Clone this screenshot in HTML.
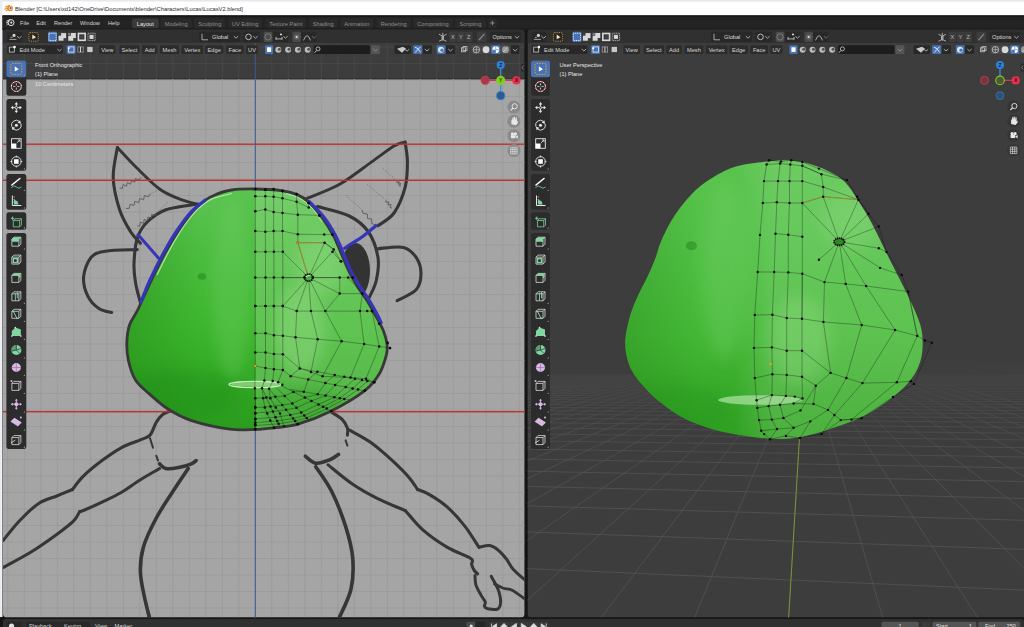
<!DOCTYPE html>
<html><head><meta charset="utf-8"><style>
html,body{margin:0;padding:0;width:1024px;height:627px;overflow:hidden;background:#161616}
svg{display:block}
text{font-family:"Liberation Sans", sans-serif}
</style></head><body>
<svg width="1024" height="627" viewBox="0 0 1024 627"><rect x="0" y="0" width="1024" height="627" fill="#161616"/><rect x="0" y="0" width="1024" height="15.5" fill="#ffffff"/><rect x="0" y="0" width="1024" height="1.5" fill="#e6e8eb"/><rect x="0" y="0" width="2.5" height="617" fill="#eceef1"/><rect x="2.5" y="15.5" width="1021.5" height="14" fill="#232323"/><rect x="2.5" y="15.5" width="1021.5" height="1.5" fill="#181818"/><rect x="2.5" y="28.3" width="1021.5" height="1.5" fill="#1d1d1d"/><g transform="translate(10.2,8.3) scale(0.85)"><circle r="3.4" fill="#f08a1c"/><path d="M-1 -3.3 L-5.8 -1.6 M-1.8 -1.2 L-6.2 1.2 M-2 0.8 L-4.5 2.8" stroke="#f08a1c" stroke-width="1.3" stroke-linecap="round"/><circle cx="0.6" cy="-0.2" r="1.9" fill="#ffffff"/><circle cx="0.6" cy="-0.2" r="1.25" fill="#2a6ec0"/></g><text x="15.00" y="10.60" font-size="5.75" fill="#2a2a2a" text-anchor="start" >Blender [C:\Users\xd142\OneDrive\Documents\blender\Characters\Lucas\LucasV2.blend]</text><g transform="translate(11,22.6)"><circle r="3" fill="none" stroke="#e0e0e0" stroke-width="1"/><circle cx="0.3" r="1.1" fill="#e0e0e0"/><path d="M-1 -3 L-4.5 -1.5 M-1.5 -1.5 L-5 0.5 M-1.8 0 L-4.5 2.5" stroke="#e0e0e0" stroke-width="0.9"/></g><text x="20.00" y="24.60" font-size="5.6" fill="#d6d6d6" text-anchor="start" >File</text><text x="36.20" y="24.60" font-size="5.6" fill="#d6d6d6" text-anchor="start" >Edit</text><text x="54.00" y="24.60" font-size="5.6" fill="#d6d6d6" text-anchor="start" >Render</text><text x="80.00" y="24.60" font-size="5.6" fill="#d6d6d6" text-anchor="start" >Window</text><text x="108.00" y="24.60" font-size="5.6" fill="#d6d6d6" text-anchor="start" >Help</text><rect x="132.00" y="18.60" width="26.60" height="9.30" rx="2" fill="#3a3a3a" /><text x="145.30" y="25.50" font-size="5.65" fill="#e6e6e6" text-anchor="middle" >Layout</text><rect x="160.50" y="18.60" width="31.30" height="9.30" rx="2" fill="#2a2a2a" /><text x="176.15" y="25.50" font-size="5.65" fill="#8e8e8e" text-anchor="middle" >Modeling</text><rect x="194.00" y="18.60" width="31.50" height="9.30" rx="2" fill="#2a2a2a" /><text x="209.75" y="25.50" font-size="5.65" fill="#8e8e8e" text-anchor="middle" >Sculpting</text><rect x="228.30" y="18.60" width="33.70" height="9.30" rx="2" fill="#2a2a2a" /><text x="245.15" y="25.50" font-size="5.65" fill="#8e8e8e" text-anchor="middle" >UV Editing</text><rect x="265.40" y="18.60" width="40.80" height="9.30" rx="2" fill="#2a2a2a" /><text x="285.80" y="25.50" font-size="5.65" fill="#8e8e8e" text-anchor="middle" >Texture Paint</text><rect x="308.80" y="18.60" width="28.80" height="9.30" rx="2" fill="#2a2a2a" /><text x="323.20" y="25.50" font-size="5.65" fill="#8e8e8e" text-anchor="middle" >Shading</text><rect x="340.00" y="18.60" width="33.50" height="9.30" rx="2" fill="#2a2a2a" /><text x="356.75" y="25.50" font-size="5.65" fill="#8e8e8e" text-anchor="middle" >Animation</text><rect x="376.70" y="18.60" width="34.10" height="9.30" rx="2" fill="#2a2a2a" /><text x="393.75" y="25.50" font-size="5.65" fill="#8e8e8e" text-anchor="middle" >Rendering</text><rect x="413.00" y="18.60" width="39.90" height="9.30" rx="2" fill="#2a2a2a" /><text x="432.95" y="25.50" font-size="5.65" fill="#8e8e8e" text-anchor="middle" >Compositing</text><rect x="455.00" y="18.60" width="30.80" height="9.30" rx="2" fill="#2a2a2a" /><text x="470.40" y="25.50" font-size="5.65" fill="#8e8e8e" text-anchor="middle" >Scripting</text><rect x="488.00" y="18.60" width="8.80" height="9.30" rx="2" fill="#2a2a2a" /><path d="M490.2 23 h4.4 M492.4 20.8 v4.4" stroke="#9a9a9a" stroke-width="0.8"/><clipPath id="clipL"><rect x="3" y="29.5" width="521.6" height="587.9" rx="4"/></clipPath><clipPath id="clipR"><rect x="527.5" y="29.5" width="502.5" height="587.9" rx="4"/></clipPath><g clip-path="url(#clipL)"><rect x="3" y="29.5" width="521.6" height="587.9" fill="#3d3d3d"/><line x1="7.8" y1="29.5" x2="7.8" y2="79" stroke="#474747" stroke-width="1"/><line x1="24.3" y1="29.5" x2="24.3" y2="79" stroke="#474747" stroke-width="1"/><line x1="40.8" y1="29.5" x2="40.8" y2="79" stroke="#474747" stroke-width="1"/><line x1="57.3" y1="29.5" x2="57.3" y2="79" stroke="#474747" stroke-width="1"/><line x1="73.8" y1="29.5" x2="73.8" y2="79" stroke="#474747" stroke-width="1"/><line x1="90.3" y1="29.5" x2="90.3" y2="79" stroke="#474747" stroke-width="1"/><line x1="106.8" y1="29.5" x2="106.8" y2="79" stroke="#474747" stroke-width="1"/><line x1="123.3" y1="29.5" x2="123.3" y2="79" stroke="#474747" stroke-width="1"/><line x1="139.8" y1="29.5" x2="139.8" y2="79" stroke="#474747" stroke-width="1"/><line x1="156.3" y1="29.5" x2="156.3" y2="79" stroke="#474747" stroke-width="1"/><line x1="172.8" y1="29.5" x2="172.8" y2="79" stroke="#474747" stroke-width="1"/><line x1="189.3" y1="29.5" x2="189.3" y2="79" stroke="#474747" stroke-width="1"/><line x1="205.8" y1="29.5" x2="205.8" y2="79" stroke="#474747" stroke-width="1"/><line x1="222.3" y1="29.5" x2="222.3" y2="79" stroke="#474747" stroke-width="1"/><line x1="238.8" y1="29.5" x2="238.8" y2="79" stroke="#474747" stroke-width="1"/><line x1="255.3" y1="29.5" x2="255.3" y2="79" stroke="#474747" stroke-width="1"/><line x1="271.8" y1="29.5" x2="271.8" y2="79" stroke="#474747" stroke-width="1"/><line x1="288.3" y1="29.5" x2="288.3" y2="79" stroke="#474747" stroke-width="1"/><line x1="304.8" y1="29.5" x2="304.8" y2="79" stroke="#474747" stroke-width="1"/><line x1="321.3" y1="29.5" x2="321.3" y2="79" stroke="#474747" stroke-width="1"/><line x1="337.8" y1="29.5" x2="337.8" y2="79" stroke="#474747" stroke-width="1"/><line x1="354.3" y1="29.5" x2="354.3" y2="79" stroke="#474747" stroke-width="1"/><line x1="370.8" y1="29.5" x2="370.8" y2="79" stroke="#474747" stroke-width="1"/><line x1="387.3" y1="29.5" x2="387.3" y2="79" stroke="#474747" stroke-width="1"/><line x1="403.8" y1="29.5" x2="403.8" y2="79" stroke="#474747" stroke-width="1"/><line x1="420.3" y1="29.5" x2="420.3" y2="79" stroke="#474747" stroke-width="1"/><line x1="436.8" y1="29.5" x2="436.8" y2="79" stroke="#474747" stroke-width="1"/><line x1="453.3" y1="29.5" x2="453.3" y2="79" stroke="#474747" stroke-width="1"/><line x1="469.8" y1="29.5" x2="469.8" y2="79" stroke="#474747" stroke-width="1"/><line x1="486.3" y1="29.5" x2="486.3" y2="79" stroke="#474747" stroke-width="1"/><line x1="502.8" y1="29.5" x2="502.8" y2="79" stroke="#474747" stroke-width="1"/><line x1="519.3" y1="29.5" x2="519.3" y2="79" stroke="#474747" stroke-width="1"/><line x1="3" y1="30.5" x2="524.6" y2="30.5" stroke="#474747" stroke-width="1"/><line x1="3" y1="47.0" x2="524.6" y2="47.0" stroke="#474747" stroke-width="1"/><line x1="3" y1="63.5" x2="524.6" y2="63.5" stroke="#474747" stroke-width="1"/><rect x="3" y="79" width="521.6" height="538.4" fill="#a5a5a5"/><rect x="3" y="78.6" width="521.6" height="1.2" fill="#262626"/><line x1="7.8" y1="79" x2="7.8" y2="617.4" stroke="#9b9b9b" stroke-width="1"/><line x1="24.3" y1="79" x2="24.3" y2="617.4" stroke="#9b9b9b" stroke-width="1"/><line x1="40.8" y1="79" x2="40.8" y2="617.4" stroke="#9b9b9b" stroke-width="1"/><line x1="57.3" y1="79" x2="57.3" y2="617.4" stroke="#9b9b9b" stroke-width="1"/><line x1="73.8" y1="79" x2="73.8" y2="617.4" stroke="#9b9b9b" stroke-width="1"/><line x1="90.3" y1="79" x2="90.3" y2="617.4" stroke="#9b9b9b" stroke-width="1"/><line x1="106.8" y1="79" x2="106.8" y2="617.4" stroke="#9b9b9b" stroke-width="1"/><line x1="123.3" y1="79" x2="123.3" y2="617.4" stroke="#9b9b9b" stroke-width="1"/><line x1="139.8" y1="79" x2="139.8" y2="617.4" stroke="#9b9b9b" stroke-width="1"/><line x1="156.3" y1="79" x2="156.3" y2="617.4" stroke="#9b9b9b" stroke-width="1"/><line x1="172.8" y1="79" x2="172.8" y2="617.4" stroke="#9b9b9b" stroke-width="1"/><line x1="189.3" y1="79" x2="189.3" y2="617.4" stroke="#9b9b9b" stroke-width="1"/><line x1="205.8" y1="79" x2="205.8" y2="617.4" stroke="#9b9b9b" stroke-width="1"/><line x1="222.3" y1="79" x2="222.3" y2="617.4" stroke="#9b9b9b" stroke-width="1"/><line x1="238.8" y1="79" x2="238.8" y2="617.4" stroke="#9b9b9b" stroke-width="1"/><line x1="255.3" y1="79" x2="255.3" y2="617.4" stroke="#9b9b9b" stroke-width="1"/><line x1="271.8" y1="79" x2="271.8" y2="617.4" stroke="#9b9b9b" stroke-width="1"/><line x1="288.3" y1="79" x2="288.3" y2="617.4" stroke="#9b9b9b" stroke-width="1"/><line x1="304.8" y1="79" x2="304.8" y2="617.4" stroke="#9b9b9b" stroke-width="1"/><line x1="321.3" y1="79" x2="321.3" y2="617.4" stroke="#9b9b9b" stroke-width="1"/><line x1="337.8" y1="79" x2="337.8" y2="617.4" stroke="#9b9b9b" stroke-width="1"/><line x1="354.3" y1="79" x2="354.3" y2="617.4" stroke="#9b9b9b" stroke-width="1"/><line x1="370.8" y1="79" x2="370.8" y2="617.4" stroke="#9b9b9b" stroke-width="1"/><line x1="387.3" y1="79" x2="387.3" y2="617.4" stroke="#9b9b9b" stroke-width="1"/><line x1="403.8" y1="79" x2="403.8" y2="617.4" stroke="#9b9b9b" stroke-width="1"/><line x1="420.3" y1="79" x2="420.3" y2="617.4" stroke="#9b9b9b" stroke-width="1"/><line x1="436.8" y1="79" x2="436.8" y2="617.4" stroke="#9b9b9b" stroke-width="1"/><line x1="453.3" y1="79" x2="453.3" y2="617.4" stroke="#9b9b9b" stroke-width="1"/><line x1="469.8" y1="79" x2="469.8" y2="617.4" stroke="#9b9b9b" stroke-width="1"/><line x1="486.3" y1="79" x2="486.3" y2="617.4" stroke="#9b9b9b" stroke-width="1"/><line x1="502.8" y1="79" x2="502.8" y2="617.4" stroke="#9b9b9b" stroke-width="1"/><line x1="519.3" y1="79" x2="519.3" y2="617.4" stroke="#9b9b9b" stroke-width="1"/><line x1="3" y1="80.0" x2="524.6" y2="80.0" stroke="#9b9b9b" stroke-width="1"/><line x1="3" y1="96.5" x2="524.6" y2="96.5" stroke="#9b9b9b" stroke-width="1"/><line x1="3" y1="113.0" x2="524.6" y2="113.0" stroke="#9b9b9b" stroke-width="1"/><line x1="3" y1="129.5" x2="524.6" y2="129.5" stroke="#9b9b9b" stroke-width="1"/><line x1="3" y1="146.0" x2="524.6" y2="146.0" stroke="#9b9b9b" stroke-width="1"/><line x1="3" y1="162.5" x2="524.6" y2="162.5" stroke="#9b9b9b" stroke-width="1"/><line x1="3" y1="179.0" x2="524.6" y2="179.0" stroke="#9b9b9b" stroke-width="1"/><line x1="3" y1="195.5" x2="524.6" y2="195.5" stroke="#9b9b9b" stroke-width="1"/><line x1="3" y1="212.0" x2="524.6" y2="212.0" stroke="#9b9b9b" stroke-width="1"/><line x1="3" y1="228.5" x2="524.6" y2="228.5" stroke="#9b9b9b" stroke-width="1"/><line x1="3" y1="245.0" x2="524.6" y2="245.0" stroke="#9b9b9b" stroke-width="1"/><line x1="3" y1="261.5" x2="524.6" y2="261.5" stroke="#9b9b9b" stroke-width="1"/><line x1="3" y1="278.0" x2="524.6" y2="278.0" stroke="#9b9b9b" stroke-width="1"/><line x1="3" y1="294.5" x2="524.6" y2="294.5" stroke="#9b9b9b" stroke-width="1"/><line x1="3" y1="311.0" x2="524.6" y2="311.0" stroke="#9b9b9b" stroke-width="1"/><line x1="3" y1="327.5" x2="524.6" y2="327.5" stroke="#9b9b9b" stroke-width="1"/><line x1="3" y1="344.0" x2="524.6" y2="344.0" stroke="#9b9b9b" stroke-width="1"/><line x1="3" y1="360.5" x2="524.6" y2="360.5" stroke="#9b9b9b" stroke-width="1"/><line x1="3" y1="377.0" x2="524.6" y2="377.0" stroke="#9b9b9b" stroke-width="1"/><line x1="3" y1="393.5" x2="524.6" y2="393.5" stroke="#9b9b9b" stroke-width="1"/><line x1="3" y1="410.0" x2="524.6" y2="410.0" stroke="#9b9b9b" stroke-width="1"/><line x1="3" y1="426.5" x2="524.6" y2="426.5" stroke="#9b9b9b" stroke-width="1"/><line x1="3" y1="443.0" x2="524.6" y2="443.0" stroke="#9b9b9b" stroke-width="1"/><line x1="3" y1="459.5" x2="524.6" y2="459.5" stroke="#9b9b9b" stroke-width="1"/><line x1="3" y1="476.0" x2="524.6" y2="476.0" stroke="#9b9b9b" stroke-width="1"/><line x1="3" y1="492.5" x2="524.6" y2="492.5" stroke="#9b9b9b" stroke-width="1"/><line x1="3" y1="509.0" x2="524.6" y2="509.0" stroke="#9b9b9b" stroke-width="1"/><line x1="3" y1="525.5" x2="524.6" y2="525.5" stroke="#9b9b9b" stroke-width="1"/><line x1="3" y1="542.0" x2="524.6" y2="542.0" stroke="#9b9b9b" stroke-width="1"/><line x1="3" y1="558.5" x2="524.6" y2="558.5" stroke="#9b9b9b" stroke-width="1"/><line x1="3" y1="575.0" x2="524.6" y2="575.0" stroke="#9b9b9b" stroke-width="1"/><line x1="3" y1="591.5" x2="524.6" y2="591.5" stroke="#9b9b9b" stroke-width="1"/><line x1="3" y1="608.0" x2="524.6" y2="608.0" stroke="#9b9b9b" stroke-width="1"/><path d="M140.40 243.20 C138.80 241.33 134.27 237.58 130.80 232.00 C127.33 226.42 122.53 218.73 119.60 209.70 C116.67 200.67 113.57 188.17 113.20 177.80 C112.83 167.43 116.70 152.55 117.40 147.50" fill="none" stroke="#363636" stroke-width="3.1" stroke-linecap="round" stroke-linejoin="round"/><path d="M117.40 147.50 C120.70 150.97 130.18 161.38 137.20 168.30 C144.22 175.22 152.60 183.95 159.50 189.00 C166.40 194.05 172.48 196.10 178.60 198.60 C184.72 201.10 193.27 203.10 196.20 204.00" fill="none" stroke="#363636" stroke-width="2.9" stroke-linecap="round" stroke-linejoin="round"/><path d="M198.00 204.00 C192.65 204.95 174.45 206.62 165.90 209.70 C157.35 212.78 151.48 217.70 146.70 222.50 C141.92 227.30 139.32 231.58 137.20 238.50 C135.08 245.42 134.27 256.58 134.00 264.00 C133.73 271.42 134.53 276.63 135.60 283.00 C136.67 289.37 138.67 296.37 140.40 302.20 C142.13 308.03 145.07 315.37 146.00 318.00" fill="none" stroke="#363636" stroke-width="3.1" stroke-linecap="round" stroke-linejoin="round"/><path d="M137.20 249.60 C131.88 249.87 113.00 249.87 105.30 251.20 C97.60 252.53 94.62 253.35 91.00 257.60 C87.38 261.85 84.15 270.32 83.60 276.70 C83.05 283.08 85.15 290.58 87.70 295.90 C90.25 301.22 94.92 305.83 98.90 308.60 C102.88 311.37 109.48 311.85 111.60 312.50" fill="none" stroke="#363636" stroke-width="3.1" stroke-linecap="round" stroke-linejoin="round"/><path d="M306.30 198.60 C311.87 196.20 328.82 190.32 339.70 184.20 C350.58 178.08 362.55 168.27 371.60 161.90 C380.65 155.53 388.42 149.30 394.00 146.00 C399.58 142.70 403.25 142.75 405.10 142.10" fill="none" stroke="#363636" stroke-width="2.9" stroke-linecap="round" stroke-linejoin="round"/><path d="M405.10 142.10 C405.48 145.40 407.40 154.35 407.40 161.90 C407.40 169.45 407.33 178.88 405.10 187.40 C402.87 195.92 398.52 206.62 394.00 213.00 C389.48 219.38 380.67 223.58 378.00 225.70" fill="none" stroke="#363636" stroke-width="3.1" stroke-linecap="round" stroke-linejoin="round"/><path d="M317.40 206.60 C322.72 208.17 340.78 211.77 349.30 216.00 C357.82 220.23 363.72 225.07 368.50 232.00 C373.28 238.93 376.68 249.60 378.00 257.60 C379.32 265.60 377.73 273.62 376.40 280.00 C375.07 286.38 372.40 290.90 370.00 295.90 C367.60 300.90 363.33 307.65 362.00 310.00" fill="none" stroke="#363636" stroke-width="3.1" stroke-linecap="round" stroke-linejoin="round"/><ellipse cx="355.5" cy="271" rx="14.5" ry="28" fill="#333333"/><path d="M378.00 248.70 C382.25 248.48 397.12 245.92 403.50 247.40 C409.88 248.88 413.38 253.25 416.30 257.60 C419.22 261.95 421.00 268.18 421.00 273.50 C421.00 278.82 420.27 284.97 416.30 289.50 C412.33 294.03 400.38 298.83 397.20 300.70" fill="none" stroke="#363636" stroke-width="3.1" stroke-linecap="round" stroke-linejoin="round"/><path d="M119.60 188.00 L122.34 188.33 L123.10 184.61 L126.50 186.29 L127.26 182.57 L130.66 184.25 L131.42 180.53 L134.82 182.21 L135.58 178.49 L138.98 180.17 L140.40 177.80" fill="none" stroke="#505050" stroke-width="0.8"/><path d="M140.4 177.8 L146 175" fill="none" stroke="#6a6a6a" stroke-width="0.7" stroke-dasharray="1.5 1.5"/><path d="M126.00 208.50 L129.18 208.33 L130.02 204.32 L133.98 205.43 L134.82 201.42 L138.78 202.53 L139.62 198.52 L143.58 199.63 L144.42 195.62 L148.38 196.73 L150.00 194.00" fill="none" stroke="#505050" stroke-width="0.8"/><path d="M150 194 L157 190.5" fill="none" stroke="#6a6a6a" stroke-width="0.7" stroke-dasharray="1.5 1.5"/><path d="M137.20 226.00 L139.95 225.94 L140.18 222.16 L143.77 223.34 L144.00 219.56 L147.59 220.74 L147.82 216.96 L151.41 218.14 L151.64 214.36 L155.23 215.54 L156.30 213.00" fill="none" stroke="#505050" stroke-width="0.8"/><path d="M156.3 213 L168 202" fill="none" stroke="#6a6a6a" stroke-width="0.7" stroke-dasharray="1.5 1.5"/><path d="M382.8 168.3 L397.2 181" fill="none" stroke="#6a6a6a" stroke-width="0.7" stroke-dasharray="1.5 1.5"/><path d="M397.20 181.00 L396.72 182.68 L399.58 181.82 L397.99 184.35 L400.85 183.49 L399.25 186.01 L401.00 186.00" fill="none" stroke="#505050" stroke-width="0.8"/><path d="M366.9 184.2 L386 200.2" fill="none" stroke="#6a6a6a" stroke-width="0.7" stroke-dasharray="1.5 1.5"/><path d="M386.00 200.20 L385.89 202.35 L389.11 201.95 L387.89 204.95 L391.11 204.55 L389.89 207.55 L392.00 208.00" fill="none" stroke="#505050" stroke-width="0.8"/><path d="M346.1 195.4 L362 210" fill="none" stroke="#6a6a6a" stroke-width="0.7" stroke-dasharray="1.5 1.5"/><path d="M362.00 210.00 L363.11 213.42 L367.39 214.08 L367.44 218.42 L371.72 219.08 L371.78 223.42 L375.00 225.00" fill="none" stroke="#505050" stroke-width="0.8"/><path d="M172.20 410.20 C170.62 410.90 165.35 412.38 162.70 414.40 C160.05 416.42 158.42 418.85 156.30 422.30 C154.18 425.75 152.65 432.17 150.00 435.10 C147.35 438.03 145.20 437.78 140.40 439.90 C135.60 442.02 127.60 444.35 121.20 447.80 C114.80 451.25 108.38 455.80 102.00 460.60 C95.62 465.40 87.82 471.78 82.90 476.60 C77.98 481.42 74.23 487.35 72.50 489.50" fill="none" stroke="#363636" stroke-width="3.1" stroke-linecap="round" stroke-linejoin="round"/><path d="M72.50 489.50 C69.98 490.53 63.10 493.33 57.40 495.70 C51.70 498.07 44.68 499.45 38.30 503.70 C31.92 507.95 24.95 515.08 19.10 521.20 C13.25 527.32 5.85 537.20 3.20 540.40" fill="none" stroke="#363636" stroke-width="3.1" stroke-linecap="round" stroke-linejoin="round"/><path d="M150.00 438.30 C150.50 439.88 152.50 446.22 153.00 447.80" fill="none" stroke="#363636" stroke-width="2.0" stroke-linecap="round" stroke-linejoin="round"/><path d="M156.30 455.80 C156.58 456.60 157.72 459.80 158.00 460.60" fill="none" stroke="#363636" stroke-width="2.0" stroke-linecap="round" stroke-linejoin="round"/><path d="M159.50 463.80 C160.57 464.60 162.72 467.97 165.90 468.60 C169.08 469.23 174.35 468.40 178.60 467.60 C182.85 466.80 188.47 464.97 191.40 463.80 C194.33 462.63 195.40 461.13 196.20 460.60" fill="none" stroke="#363636" stroke-width="3.6" stroke-linecap="round" stroke-linejoin="round"/><path d="M159.50 468.60 C156.32 470.45 146.78 475.72 140.40 479.70 C134.02 483.68 127.60 488.77 121.20 492.50 C114.80 496.23 108.12 499.18 102.00 502.10 C95.88 505.02 88.22 508.42 84.50 510.00 C80.78 511.58 80.50 511.33 79.70 511.60" fill="none" stroke="#363636" stroke-width="3.1" stroke-linecap="round" stroke-linejoin="round"/><path d="M79.70 511.60 C78.65 513.20 77.12 517.47 73.40 521.20 C69.68 524.93 64.32 528.95 57.40 534.00 C50.48 539.05 40.93 545.92 31.90 551.50 C22.87 557.08 7.98 564.83 3.20 567.50" fill="none" stroke="#363636" stroke-width="3.1" stroke-linecap="round" stroke-linejoin="round"/><path d="M188.20 468.60 C185.53 472.58 177.52 484.27 172.20 492.50 C166.88 500.73 161.08 508.97 156.30 518.00 C151.52 527.03 146.15 537.67 143.50 546.70 C140.85 555.73 140.13 563.32 140.40 572.20 C140.67 581.08 143.50 592.20 145.10 600.00 C146.70 607.80 149.18 615.83 150.00 619.00" fill="none" stroke="#363636" stroke-width="3.6" stroke-linecap="round" stroke-linejoin="round"/><path d="M146.00 603.00 C146.50 605.67 148.50 616.33 149.00 619.00" fill="none" stroke="#363636" stroke-width="2.6" stroke-linecap="round" stroke-linejoin="round"/><path d="M331.60 412.30 C333.35 413.47 339.47 416.67 342.10 419.30 C344.73 421.93 346.52 425.47 347.40 428.10 C348.28 430.73 347.40 433.93 347.40 435.10" fill="none" stroke="#363636" stroke-width="3.1" stroke-linecap="round" stroke-linejoin="round"/><path d="M349.10 429.80 C352.62 431.85 363.17 437.12 370.20 442.10 C377.23 447.08 384.87 453.85 391.30 459.70 C397.73 465.55 404.42 472.23 408.80 477.20 C413.18 482.17 416.13 487.45 417.60 489.50" fill="none" stroke="#363636" stroke-width="3.1" stroke-linecap="round" stroke-linejoin="round"/><path d="M417.60 489.50 C419.65 490.38 424.93 491.87 429.90 494.80 C434.87 497.73 441.55 501.83 447.40 507.10 C453.25 512.37 459.73 519.68 465.00 526.40 C470.27 533.12 476.67 543.90 479.00 547.40" fill="none" stroke="#363636" stroke-width="3.1" stroke-linecap="round" stroke-linejoin="round"/><path d="M479.30 547.30 C481.00 547.02 486.38 545.15 489.50 545.60 C492.62 546.05 495.15 547.72 498.00 550.00 C500.85 552.28 504.03 556.05 506.60 559.30 C509.17 562.55 510.17 565.88 513.40 569.50 C516.63 573.12 523.90 579.08 526.00 581.00" fill="none" stroke="#363636" stroke-width="3.0" stroke-linecap="round" stroke-linejoin="round"/><path d="M345.60 440.40 C345.90 441.27 347.10 444.73 347.40 445.60" fill="none" stroke="#363636" stroke-width="2.0" stroke-linecap="round" stroke-linejoin="round"/><path d="M305.30 456.20 C307.05 457.37 311.72 462.62 315.80 463.20 C319.88 463.78 326.00 461.17 329.80 459.70 C333.60 458.23 337.13 455.28 338.60 454.40" fill="none" stroke="#363636" stroke-width="3.6" stroke-linecap="round" stroke-linejoin="round"/><path d="M315.80 466.70 C318.43 470.80 326.63 481.35 331.60 491.30 C336.57 501.25 342.08 515.28 345.60 526.40 C349.12 537.52 351.82 547.48 352.70 558.00 C353.58 568.52 353.25 579.33 350.90 589.50 C348.55 599.67 340.65 614.08 338.60 619.00" fill="none" stroke="#363636" stroke-width="3.6" stroke-linecap="round" stroke-linejoin="round"/><path d="M328.10 464.90 C332.20 468.12 344.52 478.63 352.70 484.20 C360.88 489.77 368.43 493.90 377.20 498.30 C385.97 502.70 400.62 508.55 405.30 510.60" fill="none" stroke="#363636" stroke-width="3.1" stroke-linecap="round" stroke-linejoin="round"/><path d="M405.30 510.60 C408.22 513.82 415.78 523.77 422.80 529.90 C429.82 536.03 439.42 542.65 447.40 547.40 C455.38 552.15 466.67 555.57 470.70 558.40 C474.73 561.23 471.02 562.40 471.60 564.40 C472.18 566.40 473.20 568.83 474.20 570.40 C475.20 571.97 477.03 573.23 477.60 573.80" fill="none" stroke="#363636" stroke-width="3.1" stroke-linecap="round" stroke-linejoin="round"/><path d="M475.00 575.50 C475.15 577.07 474.90 581.63 475.90 584.90 C476.90 588.17 479.43 592.25 481.00 595.10 C482.57 597.95 484.73 600.15 485.30 602.00 C485.87 603.85 483.98 605.07 484.40 606.20 C484.82 607.33 485.53 608.37 487.80 608.80 C490.07 609.23 495.87 609.93 498.00 608.80 C500.13 607.67 500.45 604.85 500.60 602.00 C500.75 599.15 499.75 594.70 498.90 591.70 C498.05 588.70 496.78 586.57 495.50 584.00 C494.22 581.43 491.92 577.58 491.20 576.30" fill="none" stroke="#363636" stroke-width="3.0" stroke-linecap="round" stroke-linejoin="round"/><path d="M494.60 584.00 C496.03 584.70 500.35 587.20 503.20 588.20 C506.05 589.20 508.57 588.57 511.70 590.00 C514.83 591.43 519.62 595.13 522.00 596.80 C524.38 598.47 525.33 599.47 526.00 600.00" fill="none" stroke="#363636" stroke-width="2.8" stroke-linecap="round" stroke-linejoin="round"/><rect x="3" y="143.5" width="522" height="1.4" fill="#c03030"/><rect x="3" y="179.60000000000002" width="522" height="1.4" fill="#c03030"/><rect x="3" y="411.0" width="522" height="1.4" fill="#c03030"/><rect x="254.8" y="29.5" width="1" height="590" fill="#3a5a8c"/><defs>
<linearGradient id="gLv" gradientUnits="userSpaceOnUse" x1="0" y1="189" x2="0" y2="430">
<stop offset="0" stop-color="#5cc452"/><stop offset="0.25" stop-color="#4cbd40"/><stop offset="0.6" stop-color="#3bb52c"/><stop offset="1" stop-color="#2a9c1e"/>
</linearGradient>
<linearGradient id="gLh" gradientUnits="userSpaceOnUse" x1="126" y1="0" x2="200" y2="0">
<stop offset="0" stop-color="#1e7a12" stop-opacity="0.35"/><stop offset="1" stop-color="#1e7a12" stop-opacity="0"/>
</linearGradient>
<filter id="blur6" x="-50%" y="-50%" width="200%" height="200%"><feGaussianBlur stdDeviation="7"/></filter>
<filter id="blur3" x="-50%" y="-50%" width="200%" height="200%"><feGaussianBlur stdDeviation="3"/></filter>
<clipPath id="blobL"><path d="M255.30 189.00 C263.83 189.13 275.90 189.90 282.80 190.80 C289.70 191.70 292.33 192.48 296.70 194.40 C301.07 196.32 304.73 198.37 309.00 202.30 C313.27 206.23 318.22 212.42 322.30 218.00 C326.38 223.58 330.33 229.85 333.50 235.80 C336.67 241.75 338.70 247.73 341.30 253.70 C343.90 259.67 346.32 266.02 349.10 271.60 C351.88 277.18 355.02 282.37 358.00 287.20 C360.98 292.03 364.00 295.75 367.00 300.60 C370.00 305.45 373.25 311.23 376.00 316.30 C378.75 321.37 381.67 326.38 383.50 331.00 C385.33 335.62 386.52 340.03 387.00 344.00 C387.48 347.97 387.70 349.80 386.40 354.80 C385.10 359.80 382.80 368.02 379.20 374.00 C375.60 379.98 372.78 384.53 364.80 390.70 C356.82 396.87 342.47 405.42 331.30 411.00 C320.13 416.58 307.35 421.40 297.80 424.20 C288.25 427.00 281.08 426.93 274.00 427.80 C266.92 428.67 262.65 429.17 255.30 429.40 C247.95 429.63 240.52 430.67 229.90 429.20 C219.28 427.73 201.92 423.97 191.60 420.60 C181.28 417.23 175.10 413.50 168.00 409.00 C160.90 404.50 154.42 398.43 149.00 393.60 C143.58 388.77 138.92 385.43 135.50 380.00 C132.08 374.57 129.95 367.17 128.50 361.00 C127.05 354.83 126.63 349.00 126.80 343.00 C126.97 337.00 127.65 330.58 129.50 325.00 C131.35 319.42 134.27 316.92 137.90 309.50 C141.53 302.08 146.83 289.80 151.30 280.50 C155.77 271.20 160.25 261.88 164.70 253.70 C169.15 245.52 173.55 238.10 178.00 231.40 C182.45 224.70 186.93 218.65 191.40 213.50 C195.87 208.35 200.70 203.67 204.80 200.50 C208.90 197.33 211.53 196.25 216.00 194.50 C220.47 192.75 225.05 190.92 231.60 190.00 C238.15 189.08 246.77 188.87 255.30 189.00 Z"/></clipPath>
</defs><path d="M255.30 189.00 C263.83 189.13 275.90 189.90 282.80 190.80 C289.70 191.70 292.33 192.48 296.70 194.40 C301.07 196.32 304.73 198.37 309.00 202.30 C313.27 206.23 318.22 212.42 322.30 218.00 C326.38 223.58 330.33 229.85 333.50 235.80 C336.67 241.75 338.70 247.73 341.30 253.70 C343.90 259.67 346.32 266.02 349.10 271.60 C351.88 277.18 355.02 282.37 358.00 287.20 C360.98 292.03 364.00 295.75 367.00 300.60 C370.00 305.45 373.25 311.23 376.00 316.30 C378.75 321.37 381.67 326.38 383.50 331.00 C385.33 335.62 386.52 340.03 387.00 344.00 C387.48 347.97 387.70 349.80 386.40 354.80 C385.10 359.80 382.80 368.02 379.20 374.00 C375.60 379.98 372.78 384.53 364.80 390.70 C356.82 396.87 342.47 405.42 331.30 411.00 C320.13 416.58 307.35 421.40 297.80 424.20 C288.25 427.00 281.08 426.93 274.00 427.80 C266.92 428.67 262.65 429.17 255.30 429.40 C247.95 429.63 240.52 430.67 229.90 429.20 C219.28 427.73 201.92 423.97 191.60 420.60 C181.28 417.23 175.10 413.50 168.00 409.00 C160.90 404.50 154.42 398.43 149.00 393.60 C143.58 388.77 138.92 385.43 135.50 380.00 C132.08 374.57 129.95 367.17 128.50 361.00 C127.05 354.83 126.63 349.00 126.80 343.00 C126.97 337.00 127.65 330.58 129.50 325.00 C131.35 319.42 134.27 316.92 137.90 309.50 C141.53 302.08 146.83 289.80 151.30 280.50 C155.77 271.20 160.25 261.88 164.70 253.70 C169.15 245.52 173.55 238.10 178.00 231.40 C182.45 224.70 186.93 218.65 191.40 213.50 C195.87 208.35 200.70 203.67 204.80 200.50 C208.90 197.33 211.53 196.25 216.00 194.50 C220.47 192.75 225.05 190.92 231.60 190.00 C238.15 189.08 246.77 188.87 255.30 189.00 Z" fill="url(#gLv)"/><g clip-path="url(#blobL)"><rect x="120" y="180" width="90" height="260" fill="url(#gLh)"/><ellipse cx="232" cy="290" rx="20" ry="90" fill="#7fd474" opacity="0.28" filter="url(#blur6)"/><ellipse cx="180" cy="395" rx="60" ry="25" fill="#1f8a14" opacity="0.35" filter="url(#blur6)"/><rect x="255.3" y="185" width="140" height="250" fill="#a6e09c" opacity="0.33"/><ellipse cx="300" cy="330" rx="25" ry="45" fill="#b0e8a0" opacity="0.3" filter="url(#blur6)"/><ellipse cx="320" cy="265" rx="25" ry="30" fill="#b0e8a0" opacity="0.25" filter="url(#blur6)"/><ellipse cx="300" cy="405" rx="45" ry="18" fill="#2a9a1c" opacity="0.35" filter="url(#blur6)"/></g><path d="M255.30 189.00 C263.83 189.13 275.90 189.90 282.80 190.80 C289.70 191.70 292.33 192.48 296.70 194.40 C301.07 196.32 304.73 198.37 309.00 202.30 C313.27 206.23 318.22 212.42 322.30 218.00 C326.38 223.58 330.33 229.85 333.50 235.80 C336.67 241.75 338.70 247.73 341.30 253.70 C343.90 259.67 346.32 266.02 349.10 271.60 C351.88 277.18 355.02 282.37 358.00 287.20 C360.98 292.03 364.00 295.75 367.00 300.60 C370.00 305.45 373.25 311.23 376.00 316.30 C378.75 321.37 381.67 326.38 383.50 331.00 C385.33 335.62 386.52 340.03 387.00 344.00 C387.48 347.97 387.70 349.80 386.40 354.80 C385.10 359.80 382.80 368.02 379.20 374.00 C375.60 379.98 372.78 384.53 364.80 390.70 C356.82 396.87 342.47 405.42 331.30 411.00 C320.13 416.58 307.35 421.40 297.80 424.20 C288.25 427.00 281.08 426.93 274.00 427.80 C266.92 428.67 262.65 429.17 255.30 429.40 C247.95 429.63 240.52 430.67 229.90 429.20 C219.28 427.73 201.92 423.97 191.60 420.60 C181.28 417.23 175.10 413.50 168.00 409.00 C160.90 404.50 154.42 398.43 149.00 393.60 C143.58 388.77 138.92 385.43 135.50 380.00 C132.08 374.57 129.95 367.17 128.50 361.00 C127.05 354.83 126.63 349.00 126.80 343.00 C126.97 337.00 127.65 330.58 129.50 325.00 C131.35 319.42 134.27 316.92 137.90 309.50 C141.53 302.08 146.83 289.80 151.30 280.50 C155.77 271.20 160.25 261.88 164.70 253.70 C169.15 245.52 173.55 238.10 178.00 231.40 C182.45 224.70 186.93 218.65 191.40 213.50 C195.87 208.35 200.70 203.67 204.80 200.50 C208.90 197.33 211.53 196.25 216.00 194.50 C220.47 192.75 225.05 190.92 231.60 190.00 C238.15 189.08 246.77 188.87 255.30 189.00 Z" fill="none" stroke="#383838" stroke-width="2.8"/><path d="M232.00 193.50 C228.67 194.42 217.50 196.58 212.00 199.00 C206.50 201.42 203.00 204.42 199.00 208.00 C195.00 211.58 191.67 215.67 188.00 220.50 C184.33 225.33 180.50 231.25 177.00 237.00 C173.50 242.75 170.33 248.67 167.00 255.00 C163.67 261.33 158.67 271.67 157.00 275.00" fill="none" stroke="#d8f4d0" stroke-width="1.2" opacity="0.75"/><path d="M286.00 193.50 C288.33 194.33 295.67 196.08 300.00 198.50 C304.33 200.92 308.33 204.08 312.00 208.00 C315.67 211.92 320.33 219.67 322.00 222.00" fill="none" stroke="#d8f4d0" stroke-width="1.0" opacity="0.6"/><ellipse cx="202" cy="276.5" rx="4.2" ry="3.2" fill="#339a28" opacity="0.9"/><ellipse cx="255" cy="384.5" rx="26" ry="3" fill="none" stroke="#d8f4d0" stroke-width="1.3" opacity="0.9"/><ellipse cx="255" cy="384.5" rx="24" ry="2" fill="#9ede90" opacity="0.7"/><path d="M206.00 199.50 C203.50 201.58 195.83 206.83 191.00 212.00 C186.17 217.17 181.58 223.67 177.00 230.50 C172.42 237.33 168.00 244.75 163.50 253.00 C159.00 261.25 153.83 271.67 150.00 280.00 C146.17 288.33 142.08 299.17 140.50 303.00" fill="none" stroke="#3535b8" stroke-width="3.2"/><path d="M137.2 233.7 L159.5 259.2" stroke="#3535b8" stroke-width="3.0"/><path d="M308.50 200.80 C311.05 203.50 319.35 211.30 323.80 217.00 C328.25 222.70 331.97 229.00 335.20 235.00 C338.43 241.00 340.57 247.00 343.20 253.00 C345.83 259.00 348.20 265.40 351.00 271.00 C353.80 276.60 357.00 281.77 360.00 286.60 C363.00 291.43 366.00 295.10 369.00 300.00 C372.00 304.90 375.92 312.00 378.00 316.00 C380.08 320.00 380.92 322.67 381.50 324.00" fill="none" stroke="#3535b8" stroke-width="3.2"/><path d="M377.00 224.70 C374.50 226.75 366.50 233.70 362.00 237.00 C357.50 240.30 353.07 242.47 350.00 244.50 C346.93 246.53 344.67 248.42 343.60 249.20" fill="none" stroke="#3535b8" stroke-width="3.2"/><defs><clipPath id="blobLm"><path d="M255.30 189.00 C263.83 189.13 275.90 189.90 282.80 190.80 C289.70 191.70 292.33 192.48 296.70 194.40 C301.07 196.32 304.73 198.37 309.00 202.30 C313.27 206.23 318.22 212.42 322.30 218.00 C326.38 223.58 330.33 229.85 333.50 235.80 C336.67 241.75 338.70 247.73 341.30 253.70 C343.90 259.67 346.32 266.02 349.10 271.60 C351.88 277.18 355.02 282.37 358.00 287.20 C360.98 292.03 364.00 295.75 367.00 300.60 C370.00 305.45 373.25 311.23 376.00 316.30 C378.75 321.37 381.67 326.38 383.50 331.00 C385.33 335.62 386.52 340.03 387.00 344.00 C387.48 347.97 387.70 349.80 386.40 354.80 C385.10 359.80 382.80 368.02 379.20 374.00 C375.60 379.98 372.78 384.53 364.80 390.70 C356.82 396.87 342.47 405.42 331.30 411.00 C320.13 416.58 307.35 421.40 297.80 424.20 C288.25 427.00 281.08 426.93 274.00 427.80 C266.92 428.67 262.65 429.17 255.30 429.40 C247.95 429.63 240.52 430.67 229.90 429.20 C219.28 427.73 201.92 423.97 191.60 420.60 C181.28 417.23 175.10 413.50 168.00 409.00 C160.90 404.50 154.42 398.43 149.00 393.60 C143.58 388.77 138.92 385.43 135.50 380.00 C132.08 374.57 129.95 367.17 128.50 361.00 C127.05 354.83 126.63 349.00 126.80 343.00 C126.97 337.00 127.65 330.58 129.50 325.00 C131.35 319.42 134.27 316.92 137.90 309.50 C141.53 302.08 146.83 289.80 151.30 280.50 C155.77 271.20 160.25 261.88 164.70 253.70 C169.15 245.52 173.55 238.10 178.00 231.40 C182.45 224.70 186.93 218.65 191.40 213.50 C195.87 208.35 200.70 203.67 204.80 200.50 C208.90 197.33 211.53 196.25 216.00 194.50 C220.47 192.75 225.05 190.92 231.60 190.00 C238.15 189.08 246.77 188.87 255.30 189.00 Z"/></clipPath></defs><g clip-path="url(#blobLm)"><path d="M255.30 189.00 L255.30 196.30 L255.30 211.30 L255.30 231.00 L255.30 251.80 L255.30 277.60 L255.30 306.00 L255.30 333.30 L255.30 352.40 L255.30 366.00 L254.80 388.30 L255.30 398.30 L255.30 407.00 L255.30 413.40 L255.30 419.40 L255.30 424.20 L255.30 429.40" fill="none" stroke="#101010" stroke-width="0.5" opacity="0.65"/><path d="M265.30 189.70 L265.30 196.30 L265.30 209.40 L265.30 231.70 L265.50 251.80 L265.50 277.60 L265.50 306.00 L265.50 333.30 L265.50 352.40 L265.50 368.00 L264.40 380.60 L262.00 388.30 L263.20 398.30 L264.80 407.40 L267.20 413.40 L270.30 420.60 L274.00 427.80" fill="none" stroke="#101010" stroke-width="0.5" opacity="0.65"/><path d="M273.60 189.00 L273.60 196.70 L273.60 212.00 L273.60 231.10 L273.90 251.80 L273.90 277.60 L273.90 306.00 L273.90 335.20 L273.90 354.10 L273.90 369.20 L272.70 381.10 L269.10 388.80 L270.30 398.30 L275.80 407.40 L280.00 413.40 L284.00 426.50" fill="none" stroke="#101010" stroke-width="0.5" opacity="0.65"/><path d="M282.50 190.90 L282.50 198.30 L282.50 212.90 L282.50 231.10 L282.80 251.80 L282.80 277.60 L282.80 306.00 L282.80 335.70 L282.80 354.30 L282.80 369.90 L278.20 382.30 L282.30 384.70" fill="none" stroke="#101010" stroke-width="0.5" opacity="0.65"/><path d="M296.60 194.10 L296.60 201.80 L297.80 214.70 L297.80 234.30 L297.80 242.70" fill="none" stroke="#101010" stroke-width="0.5" opacity="0.65"/><path d="M308.70 203.00 L308.70 207.50" fill="none" stroke="#101010" stroke-width="0.5" opacity="0.65"/><path d="M255.30 196.30 L265.30 196.30 L273.60 196.70 L282.50 198.30 L296.60 201.80 L308.70 207.50" fill="none" stroke="#101010" stroke-width="0.5" opacity="0.65"/><path d="M255.30 211.30 L265.30 209.40 L273.60 212.00 L282.50 212.90 L297.80 214.70 L319.40 215.40" fill="none" stroke="#101010" stroke-width="0.5" opacity="0.65"/><path d="M255.30 231.00 L265.30 231.70 L273.60 231.10 L282.50 231.10 L297.80 234.30 L324.20 234.50 L332.50 234.50" fill="none" stroke="#101010" stroke-width="0.5" opacity="0.65"/><path d="M297.80 242.70 L324.60 242.70 L333.70 249.40 L340.90 261.30" fill="none" stroke="#101010" stroke-width="0.5" opacity="0.65"/><path d="M255.30 251.80 L265.50 251.80 L273.90 251.80 L282.80 251.80" fill="none" stroke="#101010" stroke-width="0.5" opacity="0.65"/><path d="M255.30 277.60 L265.50 277.60 L273.90 277.60 L282.80 277.60 L304.50 277.60" fill="none" stroke="#101010" stroke-width="0.5" opacity="0.65"/><path d="M312.70 277.60 L339.70 277.60 L348.10 277.60 L352.90 277.60" fill="none" stroke="#101010" stroke-width="0.5" opacity="0.65"/><path d="M255.30 306.10 L265.50 306.10 L273.90 306.10 L282.80 306.10 L296.70 311.10 L311.00 311.10 L325.40 311.10 L360.00 311.10 L367.20 311.10 L372.00 311.10" fill="none" stroke="#101010" stroke-width="0.5" opacity="0.65"/><path d="M255.30 333.30 L265.50 333.30 L273.90 335.20 L282.80 335.70 L295.50 337.30 L317.70 339.30 L341.60 341.20 L364.10 344.00 L379.20 346.40 L390.00 348.10" fill="none" stroke="#101010" stroke-width="0.5" opacity="0.65"/><path d="M255.30 352.40 L265.50 352.40 L273.90 354.10 L282.80 354.30 L299.80 368.40 L311.00 372.00 L322.50 376.30 L350.50 377.50 L366.00 378.70 L374.40 382.30" fill="none" stroke="#101010" stroke-width="0.5" opacity="0.65"/><path d="M255.30 366.00 L265.50 368.00 L273.90 369.20 L282.80 369.90 L290.70 376.30 L299.80 368.40" fill="none" stroke="#101010" stroke-width="0.5" opacity="0.65"/><path d="M339.70 293.60 L362.40 293.60" fill="none" stroke="#101010" stroke-width="0.5" opacity="0.65"/><path d="M324.60 242.70 L333.70 249.40" fill="none" stroke="#101010" stroke-width="0.5" opacity="0.65"/><path d="M332.50 251.80 L340.90 261.30" fill="none" stroke="#101010" stroke-width="0.5" opacity="0.65"/><path d="M296.70 311.10 L295.50 337.30 L299.80 368.40" fill="none" stroke="#101010" stroke-width="0.5" opacity="0.65"/><path d="M311.00 311.10 L317.70 339.30 L311.00 372.00" fill="none" stroke="#101010" stroke-width="0.5" opacity="0.65"/><path d="M325.40 311.10 L341.60 341.20 L322.50 376.30" fill="none" stroke="#101010" stroke-width="0.5" opacity="0.65"/><path d="M360.00 311.10 L364.10 344.00 L350.50 377.50" fill="none" stroke="#101010" stroke-width="0.5" opacity="0.65"/><path d="M372.00 311.10 L379.20 346.40 L366.00 378.70" fill="none" stroke="#101010" stroke-width="0.5" opacity="0.65"/><path d="M348.10 277.60 L362.40 293.60 L360.00 311.10" fill="none" stroke="#101010" stroke-width="0.5" opacity="0.65"/><path d="M339.70 277.60 L339.70 293.60 L325.40 311.10" fill="none" stroke="#101010" stroke-width="0.5" opacity="0.65"/><path d="M308.60 277.60 L297.80 242.70" fill="none" stroke="#101010" stroke-width="0.5" opacity="0.65"/><path d="M308.60 277.60 L282.80 251.80" fill="none" stroke="#101010" stroke-width="0.5" opacity="0.65"/><path d="M308.60 277.60 L282.80 277.60" fill="none" stroke="#101010" stroke-width="0.5" opacity="0.65"/><path d="M308.60 277.60 L282.80 306.10" fill="none" stroke="#101010" stroke-width="0.5" opacity="0.65"/><path d="M308.60 277.60 L296.70 311.10" fill="none" stroke="#101010" stroke-width="0.5" opacity="0.65"/><path d="M308.60 277.60 L311.00 311.10" fill="none" stroke="#101010" stroke-width="0.5" opacity="0.65"/><path d="M308.60 277.60 L325.40 311.10" fill="none" stroke="#101010" stroke-width="0.5" opacity="0.65"/><path d="M308.60 277.60 L339.70 293.60" fill="none" stroke="#101010" stroke-width="0.5" opacity="0.65"/><path d="M308.60 277.60 L339.70 277.60" fill="none" stroke="#101010" stroke-width="0.5" opacity="0.65"/><path d="M308.60 277.60 L332.50 251.80" fill="none" stroke="#101010" stroke-width="0.5" opacity="0.65"/><path d="M308.60 277.60 L324.60 242.70" fill="none" stroke="#101010" stroke-width="0.5" opacity="0.65"/><path d="M255.30 398.30 L266.28 397.40 L275.40 396.69 L284.68 395.88 L293.41 391.85 L303.81 391.73 L308.24 379.51 L317.41 371.73" fill="none" stroke="#101010" stroke-width="0.5" opacity="0.65"/><path d="M255.30 407.72 L270.53 406.51 L282.25 405.12 L292.28 403.48 L304.91 397.65 L317.80 394.23 L325.43 382.99 L334.67 374.93" fill="none" stroke="#101010" stroke-width="0.5" opacity="0.65"/><path d="M255.30 413.00 L272.91 411.62 L286.08 409.83 L296.55 407.75 L311.36 400.90 L325.64 395.64 L335.06 384.94 L344.34 376.72" fill="none" stroke="#101010" stroke-width="0.5" opacity="0.65"/><path d="M255.30 418.80 L275.52 417.24 L290.30 415.03 L301.24 412.44 L318.45 404.48 L334.26 397.18 L345.66 387.08 L354.98 378.70" fill="none" stroke="#101010" stroke-width="0.5" opacity="0.65"/><path d="M255.30 422.62 L277.24 420.94 L293.07 418.44 L304.32 415.52 L323.12 406.82 L339.93 398.20 L352.63 388.50 L361.98 380.00" fill="none" stroke="#101010" stroke-width="0.5" opacity="0.65"/><path d="M255.30 425.58 L278.58 423.81 L295.23 421.09 L306.72 417.92 L326.74 408.65 L344.33 398.98 L358.03 389.59 L367.41 381.00" fill="none" stroke="#101010" stroke-width="0.5" opacity="0.65"/><path d="M255.30 388.80 L255.30 429.40" fill="none" stroke="#101010" stroke-width="0.5" opacity="0.65"/><path d="M262.00 388.20 L280.30 427.50" fill="none" stroke="#101010" stroke-width="0.5" opacity="0.65"/><path d="M268.50 388.20 L298.00 424.50" fill="none" stroke="#101010" stroke-width="0.5" opacity="0.65"/><path d="M277.00 388.20 L309.80 421.00" fill="none" stroke="#101010" stroke-width="0.5" opacity="0.65"/><path d="M281.80 386.00 L331.40 411.00" fill="none" stroke="#101010" stroke-width="0.5" opacity="0.65"/><path d="M289.70 389.20 L350.00 400.00" fill="none" stroke="#101010" stroke-width="0.5" opacity="0.65"/><path d="M290.90 376.00 L365.00 391.00" fill="none" stroke="#101010" stroke-width="0.5" opacity="0.65"/><path d="M300.00 368.50 L374.40 382.30" fill="none" stroke="#101010" stroke-width="0.5" opacity="0.65"/></g><path d="M297.8 242.7 L324.6 242.7 M297.8 242.7 L308.6 277.6" stroke="#d07a20" stroke-width="0.6" fill="none"/><ellipse cx="308.6" cy="277.6" rx="4.3" ry="3.5" fill="#4aae3c" stroke="#0a0a0a" stroke-width="1.8" stroke-dasharray="1.4 0.6"/><path d="M305.5 277 q2.5 -2 5 -1.5" stroke="#e8f8e0" stroke-width="0.8" fill="none"/><g clip-path="url(#blobLm)"><circle cx="270.3" cy="398.3" r="1.25" fill="#0a0a0a"/><circle cx="311.4" cy="400.9" r="1.25" fill="#0a0a0a"/><circle cx="255.3" cy="424.2" r="1.25" fill="#0a0a0a"/><circle cx="296.5" cy="407.7" r="1.25" fill="#0a0a0a"/><circle cx="255.3" cy="418.8" r="1.25" fill="#0a0a0a"/><circle cx="355.0" cy="378.7" r="1.25" fill="#0a0a0a"/><circle cx="255.3" cy="413.4" r="1.25" fill="#0a0a0a"/><circle cx="255.3" cy="407.0" r="1.25" fill="#0a0a0a"/><circle cx="333.7" cy="249.4" r="1.25" fill="#0a0a0a"/><circle cx="334.3" cy="397.2" r="1.25" fill="#0a0a0a"/><circle cx="255.3" cy="422.6" r="1.25" fill="#0a0a0a"/><circle cx="270.3" cy="420.6" r="1.25" fill="#0a0a0a"/><circle cx="265.3" cy="196.3" r="1.25" fill="#0a0a0a"/><circle cx="296.6" cy="194.1" r="1.25" fill="#0a0a0a"/><circle cx="273.9" cy="277.6" r="1.25" fill="#0a0a0a"/><circle cx="265.5" cy="333.3" r="1.25" fill="#0a0a0a"/><circle cx="265.5" cy="368.0" r="1.25" fill="#0a0a0a"/><circle cx="318.5" cy="404.5" r="1.25" fill="#0a0a0a"/><circle cx="317.4" cy="371.7" r="1.25" fill="#0a0a0a"/><circle cx="282.5" cy="212.9" r="1.25" fill="#0a0a0a"/><circle cx="255.3" cy="366.0" r="1.25" fill="#0a0a0a"/><circle cx="282.8" cy="354.3" r="1.25" fill="#0a0a0a"/><circle cx="295.2" cy="421.1" r="1.25" fill="#0a0a0a"/><circle cx="324.2" cy="234.5" r="1.25" fill="#0a0a0a"/><circle cx="273.6" cy="231.1" r="1.25" fill="#0a0a0a"/><circle cx="290.3" cy="415.0" r="1.25" fill="#0a0a0a"/><circle cx="348.1" cy="277.6" r="1.25" fill="#0a0a0a"/><circle cx="265.5" cy="306.0" r="1.25" fill="#0a0a0a"/><circle cx="317.7" cy="339.3" r="1.25" fill="#0a0a0a"/><circle cx="301.2" cy="412.4" r="1.25" fill="#0a0a0a"/><circle cx="265.3" cy="231.7" r="1.25" fill="#0a0a0a"/><circle cx="282.5" cy="231.1" r="1.25" fill="#0a0a0a"/><circle cx="255.3" cy="251.8" r="1.25" fill="#0a0a0a"/><circle cx="282.8" cy="335.7" r="1.25" fill="#0a0a0a"/><circle cx="255.3" cy="196.3" r="1.25" fill="#0a0a0a"/><circle cx="255.3" cy="231.0" r="1.25" fill="#0a0a0a"/><circle cx="332.5" cy="234.5" r="1.25" fill="#0a0a0a"/><circle cx="350.5" cy="377.5" r="1.25" fill="#0a0a0a"/><circle cx="282.5" cy="198.3" r="1.25" fill="#0a0a0a"/><circle cx="255.3" cy="333.3" r="1.25" fill="#0a0a0a"/><circle cx="296.7" cy="311.1" r="1.25" fill="#0a0a0a"/><circle cx="366.0" cy="378.7" r="1.25" fill="#0a0a0a"/><circle cx="277.2" cy="420.9" r="1.25" fill="#0a0a0a"/><circle cx="367.2" cy="311.1" r="1.25" fill="#0a0a0a"/><circle cx="278.6" cy="423.8" r="1.25" fill="#0a0a0a"/><circle cx="304.9" cy="397.6" r="1.25" fill="#0a0a0a"/><circle cx="282.3" cy="384.7" r="1.25" fill="#0a0a0a"/><circle cx="341.6" cy="341.2" r="1.25" fill="#0a0a0a"/><circle cx="284.0" cy="426.5" r="1.25" fill="#0a0a0a"/><circle cx="262.0" cy="388.3" r="1.25" fill="#0a0a0a"/><circle cx="272.9" cy="411.6" r="1.25" fill="#0a0a0a"/><circle cx="325.6" cy="395.6" r="1.25" fill="#0a0a0a"/><circle cx="254.8" cy="388.3" r="1.25" fill="#0a0a0a"/><circle cx="255.3" cy="306.0" r="1.25" fill="#0a0a0a"/><circle cx="265.5" cy="277.6" r="1.25" fill="#0a0a0a"/><circle cx="339.9" cy="398.2" r="1.25" fill="#0a0a0a"/><circle cx="323.1" cy="406.8" r="1.25" fill="#0a0a0a"/><circle cx="282.8" cy="251.8" r="1.25" fill="#0a0a0a"/><circle cx="308.2" cy="379.5" r="1.25" fill="#0a0a0a"/><circle cx="266.3" cy="397.4" r="1.25" fill="#0a0a0a"/><circle cx="295.5" cy="337.3" r="1.25" fill="#0a0a0a"/><circle cx="335.1" cy="384.9" r="1.25" fill="#0a0a0a"/><circle cx="339.7" cy="277.6" r="1.25" fill="#0a0a0a"/><circle cx="306.7" cy="417.9" r="1.25" fill="#0a0a0a"/><circle cx="255.3" cy="189.0" r="1.25" fill="#0a0a0a"/><circle cx="255.3" cy="407.7" r="1.25" fill="#0a0a0a"/><circle cx="278.2" cy="382.3" r="1.25" fill="#0a0a0a"/><circle cx="273.6" cy="212.0" r="1.25" fill="#0a0a0a"/><circle cx="264.8" cy="407.4" r="1.25" fill="#0a0a0a"/><circle cx="273.9" cy="335.2" r="1.25" fill="#0a0a0a"/><circle cx="332.5" cy="251.8" r="1.25" fill="#0a0a0a"/><circle cx="312.7" cy="277.6" r="1.25" fill="#0a0a0a"/><circle cx="255.3" cy="277.6" r="1.25" fill="#0a0a0a"/><circle cx="292.3" cy="403.5" r="1.25" fill="#0a0a0a"/><circle cx="282.8" cy="306.0" r="1.25" fill="#0a0a0a"/><circle cx="372.0" cy="311.1" r="1.25" fill="#0a0a0a"/><circle cx="379.2" cy="346.4" r="1.25" fill="#0a0a0a"/><circle cx="273.9" cy="306.1" r="1.25" fill="#0a0a0a"/><circle cx="374.4" cy="382.3" r="1.25" fill="#0a0a0a"/><circle cx="303.8" cy="391.7" r="1.25" fill="#0a0a0a"/><circle cx="272.7" cy="381.1" r="1.25" fill="#0a0a0a"/><circle cx="325.4" cy="311.1" r="1.25" fill="#0a0a0a"/><circle cx="286.1" cy="409.8" r="1.25" fill="#0a0a0a"/><circle cx="282.8" cy="369.9" r="1.25" fill="#0a0a0a"/><circle cx="293.4" cy="391.9" r="1.25" fill="#0a0a0a"/><circle cx="255.3" cy="419.4" r="1.25" fill="#0a0a0a"/><circle cx="263.2" cy="398.3" r="1.25" fill="#0a0a0a"/><circle cx="273.9" cy="354.1" r="1.25" fill="#0a0a0a"/><circle cx="255.3" cy="413.0" r="1.25" fill="#0a0a0a"/><circle cx="360.0" cy="311.1" r="1.25" fill="#0a0a0a"/><circle cx="352.6" cy="388.5" r="1.25" fill="#0a0a0a"/><circle cx="273.6" cy="189.0" r="1.25" fill="#0a0a0a"/><circle cx="324.6" cy="242.7" r="1.25" fill="#0a0a0a"/><circle cx="275.4" cy="396.7" r="1.25" fill="#0a0a0a"/><circle cx="265.3" cy="209.4" r="1.25" fill="#0a0a0a"/><circle cx="339.7" cy="293.6" r="1.25" fill="#0a0a0a"/><circle cx="296.6" cy="201.8" r="1.25" fill="#0a0a0a"/><circle cx="325.4" cy="383.0" r="1.25" fill="#0a0a0a"/><circle cx="293.1" cy="418.4" r="1.25" fill="#0a0a0a"/><circle cx="282.8" cy="277.6" r="1.25" fill="#0a0a0a"/><circle cx="273.6" cy="196.7" r="1.25" fill="#0a0a0a"/><circle cx="311.0" cy="372.0" r="1.25" fill="#0a0a0a"/><circle cx="311.0" cy="311.1" r="1.25" fill="#0a0a0a"/><circle cx="344.3" cy="399.0" r="1.25" fill="#0a0a0a"/><circle cx="265.3" cy="189.7" r="1.25" fill="#0a0a0a"/><circle cx="390.0" cy="348.1" r="1.25" fill="#0a0a0a"/><circle cx="352.9" cy="277.6" r="1.25" fill="#0a0a0a"/><circle cx="265.5" cy="352.4" r="1.25" fill="#0a0a0a"/><circle cx="358.0" cy="389.6" r="1.25" fill="#0a0a0a"/><circle cx="273.9" cy="369.2" r="1.25" fill="#0a0a0a"/><circle cx="282.5" cy="190.9" r="1.25" fill="#0a0a0a"/><circle cx="269.1" cy="388.8" r="1.25" fill="#0a0a0a"/><circle cx="265.5" cy="306.1" r="1.25" fill="#0a0a0a"/><circle cx="308.7" cy="203.0" r="1.25" fill="#0a0a0a"/><circle cx="274.0" cy="427.8" r="1.25" fill="#0a0a0a"/><circle cx="275.8" cy="407.4" r="1.25" fill="#0a0a0a"/><circle cx="267.2" cy="413.4" r="1.25" fill="#0a0a0a"/><circle cx="334.7" cy="374.9" r="1.25" fill="#0a0a0a"/><circle cx="255.3" cy="211.3" r="1.25" fill="#0a0a0a"/><circle cx="297.8" cy="234.3" r="1.25" fill="#0a0a0a"/><circle cx="280.0" cy="413.4" r="1.25" fill="#0a0a0a"/><circle cx="255.3" cy="352.4" r="1.25" fill="#0a0a0a"/><circle cx="264.4" cy="380.6" r="1.25" fill="#0a0a0a"/><circle cx="265.5" cy="251.8" r="1.25" fill="#0a0a0a"/><circle cx="275.5" cy="417.2" r="1.25" fill="#0a0a0a"/><circle cx="255.3" cy="306.1" r="1.25" fill="#0a0a0a"/><circle cx="322.5" cy="376.3" r="1.25" fill="#0a0a0a"/><circle cx="255.3" cy="425.6" r="1.25" fill="#0a0a0a"/><circle cx="297.8" cy="242.7" r="1.25" fill="#0a0a0a"/><circle cx="273.9" cy="251.8" r="1.25" fill="#0a0a0a"/><circle cx="304.3" cy="415.5" r="1.25" fill="#0a0a0a"/><circle cx="364.1" cy="344.0" r="1.25" fill="#0a0a0a"/><circle cx="344.3" cy="376.7" r="1.25" fill="#0a0a0a"/><circle cx="308.7" cy="207.5" r="1.25" fill="#0a0a0a"/><circle cx="317.8" cy="394.2" r="1.25" fill="#0a0a0a"/><circle cx="297.8" cy="214.7" r="1.25" fill="#0a0a0a"/><circle cx="304.5" cy="277.6" r="1.25" fill="#0a0a0a"/><circle cx="326.7" cy="408.6" r="1.25" fill="#0a0a0a"/><circle cx="340.9" cy="261.3" r="1.25" fill="#0a0a0a"/><circle cx="255.3" cy="398.3" r="1.25" fill="#0a0a0a"/><circle cx="270.5" cy="406.5" r="1.25" fill="#0a0a0a"/><circle cx="282.2" cy="405.1" r="1.25" fill="#0a0a0a"/><circle cx="299.8" cy="368.4" r="1.25" fill="#0a0a0a"/><circle cx="362.0" cy="380.0" r="1.25" fill="#0a0a0a"/><circle cx="319.4" cy="215.4" r="1.25" fill="#0a0a0a"/><circle cx="284.7" cy="395.9" r="1.25" fill="#0a0a0a"/><circle cx="345.7" cy="387.1" r="1.25" fill="#0a0a0a"/><circle cx="273.9" cy="306.0" r="1.25" fill="#0a0a0a"/><circle cx="290.7" cy="376.3" r="1.25" fill="#0a0a0a"/><circle cx="255.3" cy="429.4" r="1.25" fill="#0a0a0a"/><circle cx="282.8" cy="306.1" r="1.25" fill="#0a0a0a"/><circle cx="367.4" cy="381.0" r="1.25" fill="#0a0a0a"/></g><circle cx="297.8" cy="242.7" r="1.2" fill="#f08020"/><circle cx="255.3" cy="366" r="1.3" fill="#f0a020"/><circle cx="255.3" cy="189.0" r="1.35" fill="#0a0a0a"/><circle cx="265.3" cy="189.7" r="1.35" fill="#0a0a0a"/><circle cx="273.6" cy="189.0" r="1.35" fill="#0a0a0a"/><circle cx="282.5" cy="190.9" r="1.35" fill="#0a0a0a"/><circle cx="296.6" cy="194.1" r="1.35" fill="#0a0a0a"/><circle cx="308.7" cy="203.0" r="1.35" fill="#0a0a0a"/><circle cx="319.4" cy="215.4" r="1.35" fill="#0a0a0a"/><circle cx="332.5" cy="234.5" r="1.35" fill="#0a0a0a"/><circle cx="341.0" cy="261.3" r="1.35" fill="#0a0a0a"/><circle cx="352.9" cy="277.6" r="1.35" fill="#0a0a0a"/><circle cx="362.4" cy="293.6" r="1.35" fill="#0a0a0a"/><circle cx="372.0" cy="311.1" r="1.35" fill="#0a0a0a"/><circle cx="379.2" cy="323.7" r="1.35" fill="#0a0a0a"/><circle cx="387.6" cy="342.8" r="1.35" fill="#0a0a0a"/><circle cx="390.0" cy="348.1" r="1.35" fill="#0a0a0a"/><circle cx="374.4" cy="382.3" r="1.35" fill="#0a0a0a"/><circle cx="364.8" cy="390.7" r="1.35" fill="#0a0a0a"/><circle cx="331.3" cy="411.0" r="1.35" fill="#0a0a0a"/><circle cx="297.8" cy="424.2" r="1.35" fill="#0a0a0a"/><circle cx="274.0" cy="427.8" r="1.35" fill="#0a0a0a"/><circle cx="255.3" cy="429.4" r="1.35" fill="#0a0a0a"/><rect x="3" y="29.5" width="521.6" height="13.5" fill="#303030"/><rect x="7.10" y="31.80" width="15.20" height="10.20" rx="1.5" fill="#282828" /><circle cx="14" cy="35.4" r="1.6" fill="#d0d0d0"/><path d="M9.5 39.4 h7 M10.5 37.4 h2" stroke="#c0c0c0" stroke-width="0.8"/><path d="M17.10 36.20 L19.30 38.20 L21.50 36.20" stroke="#c8c8c8" stroke-width="0.8" fill="none"/><rect x="27.90" y="31.80" width="11.40" height="10.20" rx="1.5" fill="#282828" /><rect x="28.9" y="32.6" width="9.4" height="8.6" fill="none" stroke="#d4962a" stroke-width="0.9" stroke-dasharray="1.3 0.9" rx="1"/><path d="M32.3 34.5 L32.3 39.3 L36 37.199999999999996 Z" fill="#e8e8e8"/><rect x="48.00" y="31.80" width="9.14" height="10.20" rx="1" fill="#4772b3" /><rect x="48.97" y="33.30" width="7.2" height="7.2" fill="none" stroke="#e8eef8" stroke-width="0.9" stroke-dasharray="1.1 0.7"/><rect x="57.74" y="31.80" width="9.14" height="10.20" rx="1" fill="#3a3a3a" /><rect x="58.51" y="35.70" width="5" height="5" fill="#d8d8d8"/><rect x="61.11" y="33.10" width="5" height="5" fill="#d8d8d8"/><rect x="67.48" y="31.80" width="9.14" height="10.20" rx="1" fill="#3a3a3a" /><path d="M68.25 35.70 h2.6 v-2.6 h5 v5 h-2.6 v2.6 h-5 z" fill="#d8d8d8"/><rect x="68.25" y="33.10" width="2" height="2" fill="#888"/><rect x="77.22" y="31.80" width="9.14" height="10.20" rx="1" fill="#3a3a3a" /><rect x="78.39" y="33.50" width="6.8" height="6.8" fill="none" stroke="#d8d8d8" stroke-width="1.6"/><rect x="80.49" y="35.60" width="2.6" height="2.6" fill="#444"/><rect x="86.96" y="31.80" width="9.14" height="10.20" rx="1" fill="#3a3a3a" /><rect x="87.93" y="33.30" width="7.2" height="7.2" fill="none" stroke="#b8b8b8" stroke-width="0.8" stroke-dasharray="1.1 0.7"/><rect x="89.53" y="34.90" width="4" height="4" fill="#d8d8d8"/><rect x="199.00" y="31.80" width="41.00" height="10.20" rx="1.5" fill="#282828" /><path d="M202 33.8 v6 h6" stroke="#c8c8c8" stroke-width="0.8" fill="none"/><text x="212.00" y="39.00" font-size="5.65" fill="#d8d8d8" text-anchor="start" >Global</text><path d="M233.80 36.20 L236.00 38.20 L238.20 36.20" stroke="#c8c8c8" stroke-width="0.8" fill="none"/><rect x="243.60" y="31.80" width="16.00" height="10.20" rx="1.5" fill="#282828" /><circle cx="248.5" cy="36.9" r="2.8" fill="none" stroke="#c8c8c8" stroke-width="0.9"/><path d="M253.30 36.20 L255.50 38.20 L257.70 36.20" stroke="#c8c8c8" stroke-width="0.8" fill="none"/><rect x="263.70" y="31.80" width="24.60" height="10.20" rx="1.5" fill="#282828" /><rect x="263.70" y="31.80" width="8.80" height="10.20" rx="1.2" fill="#4a4a4a" /><circle cx="268.1" cy="36.9" r="3.2" fill="none" stroke="#7a7a7a" stroke-width="1"/><path d="M276 38.9 h6 M276 36.9 v3 M282 36.9 v3" stroke="#d0d0d0" stroke-width="0.8"/><circle cx="281" cy="34.4" r="0.9" fill="#ffffff"/><path d="M283.30 36.20 L285.50 38.20 L287.70 36.20" stroke="#c8c8c8" stroke-width="0.8" fill="none"/><rect x="292.40" y="31.80" width="24.60" height="10.20" rx="1.5" fill="#282828" /><rect x="292.40" y="31.80" width="8.60" height="10.20" rx="1.2" fill="#4a4a4a" /><circle cx="296.7" cy="36.9" r="2.6" fill="#666"/><circle cx="296.7" cy="36.9" r="1" fill="#e0e0e0"/><path d="M303.5 40.4 Q307 30.9 310.5 40.4" stroke="#c8c8c8" stroke-width="0.8" fill="none"/><path d="M312.00 36.20 L314.20 38.20 L316.40 36.20" stroke="#777" stroke-width="0.8" fill="none"/><path d="M439 34.3 l3 1.5 v4 l-3 1.5 M446.5 34.3 l-3 1.5 v4 l3 1.5 M442.75 32.8 v8" stroke="#c8c8c8" stroke-width="0.8" fill="none"/><rect x="449.00" y="31.80" width="7.60" height="10.20" rx="1" fill="#3c3c3c" /><text x="452.80" y="38.90" font-size="5.5" fill="#bdbdbd" text-anchor="middle" >X</text><rect x="457.00" y="31.80" width="7.60" height="10.20" rx="1" fill="#3c3c3c" /><text x="460.80" y="38.90" font-size="5.5" fill="#bdbdbd" text-anchor="middle" >Y</text><rect x="465.00" y="31.80" width="7.60" height="10.20" rx="1" fill="#3c3c3c" /><text x="468.80" y="38.90" font-size="5.5" fill="#bdbdbd" text-anchor="middle" >Z</text><rect x="477.00" y="31.80" width="9.50" height="10.20" rx="1" fill="#3c3c3c" /><path d="M479 40.0 L484.5 33.8" stroke="#888" stroke-width="1.2"/><rect x="490.00" y="31.80" width="30.70" height="10.20" rx="1.5" fill="#282828" /><text x="492.50" y="39.00" font-size="5.65" fill="#d8d8d8" text-anchor="start" >Options</text><path d="M514.80 36.20 L517.00 38.20 L519.20 36.20" stroke="#c8c8c8" stroke-width="0.8" fill="none"/><rect x="7.10" y="45.30" width="55.90" height="8.80" rx="1.5" fill="#282828" /><rect x="9.3" y="47.099999999999994" width="5" height="5" fill="none" stroke="#c8c8c8" stroke-width="0.8"/><circle cx="14.5" cy="47.099999999999994" r="1.3" fill="#ffffff"/><text x="19.50" y="51.80" font-size="5.65" fill="#d8d8d8" text-anchor="start" >Edit Mode</text><path d="M57.30 49.00 L59.50 51.00 L61.70 49.00" stroke="#c8c8c8" stroke-width="0.8" fill="none"/><rect x="66.70" y="45.30" width="8.90" height="8.80" rx="1" fill="#4772b3" /><rect x="76.00" y="45.30" width="8.90" height="8.80" rx="1" fill="#3a3a3a" /><rect x="85.30" y="45.30" width="8.90" height="8.80" rx="1" fill="#3a3a3a" /><rect x="68.6" y="46.9" width="5.4" height="5.2" fill="none" stroke="#e8eef8" stroke-width="0.8"/><circle cx="68.8" cy="48.3" r="1" fill="#ffffff"/><rect x="77.8" y="46.9" width="5.4" height="5.2" fill="none" stroke="#9a9a9a" stroke-width="0.8"/><path d="M80.5 46.9 v5.2" stroke="#e0e0e0" stroke-width="0.9"/><rect x="87.2" y="46.9" width="5.4" height="5.2" fill="#c8c8c8"/><rect x="99.00" y="45.30" width="16.50" height="8.80" rx="1.5" fill="#2c2c2c" /><text x="107.25" y="51.80" font-size="5.65" fill="#d8d8d8" text-anchor="middle" >View</text><rect x="119.30" y="45.30" width="20.30" height="8.80" rx="1.5" fill="#2c2c2c" /><text x="129.45" y="51.80" font-size="5.65" fill="#d8d8d8" text-anchor="middle" >Select</text><rect x="142.00" y="45.30" width="15.40" height="8.80" rx="1.5" fill="#2c2c2c" /><text x="149.70" y="51.80" font-size="5.65" fill="#d8d8d8" text-anchor="middle" >Add</text><rect x="160.00" y="45.30" width="19.00" height="8.80" rx="1.5" fill="#2c2c2c" /><text x="169.50" y="51.80" font-size="5.65" fill="#d8d8d8" text-anchor="middle" >Mesh</text><rect x="181.50" y="45.30" width="21.50" height="8.80" rx="1.5" fill="#2c2c2c" /><text x="192.25" y="51.80" font-size="5.65" fill="#d8d8d8" text-anchor="middle" >Vertex</text><rect x="205.00" y="45.30" width="18.40" height="8.80" rx="1.5" fill="#2c2c2c" /><text x="214.20" y="51.80" font-size="5.65" fill="#d8d8d8" text-anchor="middle" >Edge</text><rect x="225.90" y="45.30" width="17.80" height="8.80" rx="1.5" fill="#2c2c2c" /><text x="234.80" y="51.80" font-size="5.65" fill="#d8d8d8" text-anchor="middle" >Face</text><rect x="246.00" y="45.30" width="12.00" height="8.80" rx="1.5" fill="#2c2c2c" /><text x="252.00" y="51.80" font-size="5.65" fill="#d8d8d8" text-anchor="middle" >UV</text><rect x="265.00" y="45.30" width="8.20" height="8.80" rx="1" fill="#4772b3" /><rect x="267" y="47.3" width="4.2" height="4.6" fill="#ffffff"/><rect x="273.50" y="45.30" width="9.60" height="8.80" rx="1" fill="#3a3a3a" /><circle cx="278.3" cy="49.7" r="3" fill="#bdbdbd"/><circle cx="279.3" cy="49.2" r="1.5" fill="#555"/><rect x="283.30" y="45.30" width="9.60" height="8.80" rx="1" fill="#3a3a3a" /><circle cx="288.1" cy="49.7" r="3" fill="#bdbdbd"/><circle cx="289.1" cy="49.2" r="1.5" fill="#555"/><rect x="293.10" y="45.30" width="9.60" height="8.80" rx="1" fill="#3a3a3a" /><circle cx="297.90000000000003" cy="49.7" r="3" fill="#bdbdbd"/><circle cx="298.90000000000003" cy="49.2" r="1.5" fill="#555"/><rect x="302.90" y="45.30" width="9.60" height="8.80" rx="1" fill="#3a3a3a" /><circle cx="307.7" cy="49.7" r="3" fill="#bdbdbd"/><circle cx="308.7" cy="49.2" r="1.5" fill="#555"/><rect x="313.40" y="45.30" width="56.90" height="8.80" rx="1.5" fill="#1d1d1d" /><circle cx="318" cy="48.900000000000006" r="2" fill="none" stroke="#d0d0d0" stroke-width="0.8"/><path d="M316.5 50.5 l-2 2.3" stroke="#d0d0d0" stroke-width="0.9"/><rect x="371.00" y="45.30" width="9.00" height="8.80" rx="1" fill="#555555" /><path d="M373.30 49.00 L375.50 51.00 L377.70 49.00" stroke="#9a9a9a" stroke-width="0.8" fill="none"/><rect x="394.50" y="45.30" width="16.50" height="8.80" rx="1.5" fill="#282828" /><rect x="422.30" y="45.30" width="9.70" height="8.80" rx="1.5" fill="#282828" /><rect x="445.50" y="45.30" width="9.70" height="8.80" rx="1.5" fill="#282828" /><path d="M397 48.7 l6 -2 l3 2 l-4 4 z" fill="#c8c8c8"/><path d="M404.80 49.20 L407.00 51.20 L409.20 49.20" stroke="#c8c8c8" stroke-width="0.8" fill="none"/><rect x="413.20" y="45.30" width="9.10" height="8.80" rx="1" fill="#4772b3" /><path d="M415 52.6 L420.5 46.8 M415 47.3 q3 0 5.5 5" stroke="#ffffff" stroke-width="0.8" fill="none"/><path d="M424.80 49.00 L427.00 51.00 L429.20 49.00" stroke="#c8c8c8" stroke-width="0.8" fill="none"/><rect x="436.80" y="45.30" width="8.70" height="8.80" rx="1" fill="#4772b3" /><circle cx="441" cy="49.7" r="3" fill="#dfe6f0"/><circle cx="442" cy="50.2" r="1.6" fill="#4772b3"/><path d="M448.30 49.00 L450.50 51.00 L452.70 49.00" stroke="#c8c8c8" stroke-width="0.8" fill="none"/><rect x="459.20" y="45.30" width="9.60" height="8.80" rx="1" fill="#3a3a3a" /><rect x="461.5" y="47.8" width="4" height="4" fill="none" stroke="#c8c8c8" stroke-width="0.8"/><rect x="463" y="46.599999999999994" width="4" height="4" fill="none" stroke="#c8c8c8" stroke-width="0.8"/><rect x="471.70" y="45.30" width="9.30" height="8.80" rx="1" fill="#4a4a4a" /><circle cx="476.35" cy="49.7" r="3.2" fill="none" stroke="#c8c8c8" stroke-width="0.8"/><path d="M473.15000000000003 49.7 h6.4 M476.35 46.5 v6.4" stroke="#c8c8c8" stroke-width="0.6"/><rect x="481.40" y="45.30" width="9.30" height="8.80" rx="1" fill="#4a4a4a" /><circle cx="486.05" cy="49.7" r="3.4" fill="#d8d8d8"/><rect x="491.10" y="45.30" width="9.30" height="8.80" rx="1" fill="#4772b3" /><circle cx="495.75" cy="49.7" r="3.4" fill="#ffffff"/><path d="M495.75 49.7 v3.4 a3.4 3.4 0 0 1 -3.4 -3.4 z" fill="#4772b3"/><path d="M495.75 46.300000000000004 v3.4 h3.4" fill="none" stroke="#4772b3" stroke-width="0.6"/><rect x="500.80" y="45.30" width="9.30" height="8.80" rx="1" fill="#4a4a4a" /><circle cx="505.45000000000005" cy="49.7" r="3.4" fill="#9a9a9a"/><path d="M503.05000000000007 52.1 L507.85 47.300000000000004" stroke="#d0d0d0" stroke-width="0.8"/><rect x="511.00" y="45.30" width="8.40" height="8.80" rx="1" fill="#282828" /><path d="M513.00 49.00 L515.20 51.00 L517.40 49.00" stroke="#c8c8c8" stroke-width="0.8" fill="none"/><rect x="6.40" y="60.60" width="19.90" height="35.10" rx="2.5" fill="#2c2c2c" /><rect x="6.40" y="98.90" width="19.90" height="71.80" rx="2.5" fill="#2c2c2c" /><rect x="6.40" y="173.90" width="19.90" height="35.90" rx="2.5" fill="#2c2c2c" /><rect x="6.40" y="212.20" width="19.90" height="17.50" rx="2.5" fill="#2c2c2c" /><rect x="6.40" y="232.90" width="19.90" height="216.10" rx="2.5" fill="#2c2c2c" /><rect x="6.40" y="60.60" width="19.90" height="16.70" rx="2.5" fill="#4772b3" /><g transform="translate(16.35,68.90) scale(1.0)"><rect x="-5.5" y="-5.5" width="11" height="11" rx="1.5" fill="none" stroke="#e0a030" stroke-width="1" stroke-dasharray="1.6 1.1"/><path d="M-1.6 -2.6 V2.6 L2.4 0.3 Z" fill="#ffffff"/></g><g transform="translate(16.35,86.50) scale(1.0)"><circle r="5" fill="none" stroke="#ffffff" stroke-width="1"/><circle r="5" fill="none" stroke="#e03a3a" stroke-width="1" stroke-dasharray="1.8 1.6"/><path d="M0 -3.2 V-1 M0 1 V3.2 M-3.2 0 H-1 M1 0 H3.2" stroke="#d8d8d8" stroke-width="0.8"/></g><g transform="translate(16.35,107.60) scale(1.0)"><path d="M-4.5 0 H4.5 M0 -4.5 V4.5" stroke="#e8e8e8" stroke-width="0.9"/><path d="M-5.5 0 L-3.2 -1.8 V1.8 Z M5.5 0 L3.2 -1.8 V1.8 Z M0 -5.5 L-1.8 -3.2 H1.8 Z M0 5.5 L-1.8 3.2 H1.8 Z" fill="#e8e8e8"/><circle r="1.2" fill="#2c2c2c" stroke="#e8e8e8" stroke-width="0.7"/></g><g transform="translate(16.35,125.20) scale(1.0)"><path d="M-4.6 1.5 A4.8 4.8 0 0 1 3 -3.8 M4.6 -1.5 A4.8 4.8 0 0 1 -3 3.8" fill="none" stroke="#e8e8e8" stroke-width="0.9"/><path d="M3.8 -5 L4.6 -1.5 L1.2 -2.5 Z M-3.8 5 L-4.6 1.5 L-1.2 2.5 Z" fill="#e8e8e8"/><circle r="1.5" fill="#e8e8e8"/></g><g transform="translate(16.35,143.50) scale(1.0)"><rect x="-4.8" y="-4.8" width="9.6" height="9.6" fill="none" stroke="#e8e8e8" stroke-width="0.9"/><rect x="-4.8" y="0" width="4.8" height="4.8" fill="#ffffff"/><path d="M0.5 -0.5 L3.5 -3.5 M1.5 -3.5 H3.5 V-1.5" stroke="#e8e8e8" stroke-width="0.8" fill="none"/></g><g transform="translate(16.35,161.50) scale(1.0)"><circle r="4.8" fill="none" stroke="#e8e8e8" stroke-width="0.9"/><rect x="-2.3" y="-2.3" width="4.6" height="4.6" fill="#ffffff"/><path d="M0 -6 V-4 M0 4 V6 M-6 0 H-4 M4 0 H6" stroke="#e8e8e8" stroke-width="0.8"/></g><g transform="translate(16.35,183.50) scale(1.0)"><path d="M-4.5 1.5 L3.5 -5" stroke="#ffffff" stroke-width="1.6" stroke-linecap="round"/><path d="M-5 4 Q-2.5 1 0 3.5 T5 3.5" stroke="#7fd6a0" stroke-width="0.8" fill="none"/></g><g transform="translate(16.35,201.00) scale(1.0)"><path d="M-4 -5.5 V4.5 H5" stroke="#e8e8e8" stroke-width="1" fill="none"/><path d="M-2.8 -4 h1.4 M-2.8 -1.5 h1.4 M-2.8 1 h1.4" stroke="#e8e8e8" stroke-width="0.6"/><path d="M-2.5 3.5 V-1 A4.5 4.5 0 0 1 2 3.5 Z" fill="#7fd6a0"/></g><g transform="translate(16.35,221.80) scale(1.0)"><g transform="translate(1,1) scale(0.9)"><path d="M-4.5 -2.5 H2.5 V4.5 H-4.5 Z M-4.5 -2.5 L-2.5 -4.5 H4.5 V2.5 L2.5 4.5 M2.5 -2.5 L4.5 -4.5" fill="none" stroke="#7fd6a0" stroke-width="0.85" stroke-linejoin="round"/></g><path d="M-5.5 -3.5 H-2 M-3.75 -5.25 V-1.75" stroke="#7fd6a0" stroke-width="0.9"/></g><g transform="translate(16.35,241.70) scale(1.0)"><path d="M-4.5 -2.5 H2.5 V4.5 H-4.5 Z M-4.5 -2.5 L-2.5 -4.5 H4.5 V2.5 L2.5 4.5 M2.5 -2.5 L4.5 -4.5" fill="none" stroke="#e6e6e6" stroke-width="0.75" stroke-linejoin="round"/><path d="M-4.5 -2.5 L-2.5 -4.5 H4.5 L2.5 -2.5 Z M-4.5 -2.5 H2.5 V0 H-4.5 Z" fill="#7fd6a0"/></g><g transform="translate(16.35,259.60) scale(1.0)"><path d="M-4.5 -2.5 H2.5 V4.5 H-4.5 Z M-4.5 -2.5 L-2.5 -4.5 H4.5 V2.5 L2.5 4.5 M2.5 -2.5 L4.5 -4.5" fill="none" stroke="#e6e6e6" stroke-width="0.75" stroke-linejoin="round"/><rect x="-3" y="-1" width="4" height="4" fill="none" stroke="#7fd6a0" stroke-width="1.4"/></g><g transform="translate(16.35,277.90) scale(1.0)"><path d="M-4.5 -2.5 H2.5 V4.5 H-4.5 Z M-4.5 -2.5 L-2.5 -4.5 H4.5 V2.5 L2.5 4.5 M2.5 -2.5 L4.5 -4.5" fill="none" stroke="#e6e6e6" stroke-width="0.75" stroke-linejoin="round"/><path d="M-4.5 -2.5 H1 Q2.5 -2.5 2.5 -1 V0.5 L4.5 -2 L2.5 -4.5 H-2.5 Z" fill="#7fd6a0"/></g><g transform="translate(16.35,296.30) scale(1.0)"><path d="M-4.5 -2.5 H2.5 V4.5 H-4.5 Z M-4.5 -2.5 L-2.5 -4.5 H4.5 V2.5 L2.5 4.5 M2.5 -2.5 L4.5 -4.5" fill="none" stroke="#e6e6e6" stroke-width="0.75" stroke-linejoin="round"/><path d="M-1 -3 V4.5 M1 -4.5 V2" stroke="#7fd6a0" stroke-width="0.9"/></g><g transform="translate(16.35,313.80) scale(1.0)"><path d="M-4.5 -2.5 H2.5 V4.5 H-4.5 Z M-4.5 -2.5 L-2.5 -4.5 H4.5 V2.5 L2.5 4.5 M2.5 -2.5 L4.5 -4.5" fill="none" stroke="#e6e6e6" stroke-width="0.75" stroke-linejoin="round"/><path d="M-3 -2.5 L0.5 4.5" stroke="#7fd6a0" stroke-width="1"/><circle cx="-3" cy="-2.5" r="0.9" fill="#7fd6a0"/><circle cx="0.5" cy="4.5" r="0.9" fill="#7fd6a0"/></g><g transform="translate(16.35,332.10) scale(1.0)"><path d="M-4.5 4 L-4.5 -1 L-1 -4.5 L4.5 -2.5 L4.5 4 Z" fill="#7fd6a0"/><circle cx="-4.5" cy="4" r="0.8" fill="#e8e8e8"/><circle cx="4.5" cy="4" r="0.8" fill="#e8e8e8"/><circle cx="-1" cy="-4.5" r="0.8" fill="#e8e8e8"/></g><g transform="translate(16.35,350.00) scale(1.0)"><circle r="5" fill="#7fd6a0"/><path d="M0 0 V-5 M0 0 L3.5 3.5 M0 0 L-4.8 1.2 M0 0 L4.8 -1.5" stroke="#2c2c2c" stroke-width="0.7"/><path d="M0 0 L0 -5 A5 5 0 0 0 -4.8 1.2 Z" fill="#2c2c2c" opacity="0.35"/></g><g transform="translate(16.35,367.50) scale(1.0)"><ellipse rx="4.6" ry="4.4" fill="#d9b8e8"/><path d="M-4.6 0 H4.6 M0 -4.4 V4.4" stroke="#8a6a9a" stroke-width="0.6"/></g><g transform="translate(16.35,385.90) scale(1.0)"><path d="M-4.5 -2.5 H2.5 V4.5 H-4.5 Z M-4.5 -2.5 L-2.5 -4.5 H4.5 V2.5 L2.5 4.5 M2.5 -2.5 L4.5 -4.5" fill="none" stroke="#e6e6e6" stroke-width="0.75" stroke-linejoin="round"/><circle cx="-5" cy="-5" r="1" fill="#d9b8e8"/></g><g transform="translate(16.35,404.20) scale(1.0)"><path d="M-5 0 H5 M0 -5 V5" stroke="#d9b8e8" stroke-width="0.9"/><path d="M-5.5 0 L-3.5 -1.5 V1.5 Z M5.5 0 L3.5 -1.5 V1.5 Z M0 -5.5 L-1.5 -3.5 H1.5 Z M0 5.5 L-1.5 3.5 H1.5 Z" fill="#d9b8e8"/><circle r="2" fill="#d9b8e8"/></g><g transform="translate(16.35,422.60) scale(1.0)"><path d="M-5.5 -1 L-2 -4.5 L5 0 L1.5 3.5 Z" fill="#d9b8e8" stroke="#ffffff" stroke-width="0.4"/><circle cx="4.5" cy="-5" r="1" fill="#d9b8e8"/></g><g transform="translate(16.35,440.10) scale(1.0)"><path d="M-4.5 -2.5 H2.5 V4.5 H-4.5 Z M-4.5 -2.5 L-2.5 -4.5 H4.5 V2.5 L2.5 4.5 M2.5 -2.5 L4.5 -4.5" fill="none" stroke="#e6e6e6" stroke-width="0.75" stroke-linejoin="round"/><path d="M-5.5 3 L-1 0" stroke="#e8e8e8" stroke-width="0.8"/></g><path d="M23.40 76.00 L25.00 74.40 L25.00 76.00 Z" fill="#9a9a9a"/><path d="M23.40 169.40 L25.00 167.80 L25.00 169.40 Z" fill="#9a9a9a"/><path d="M23.40 191.00 L25.00 189.40 L25.00 191.00 Z" fill="#9a9a9a"/><path d="M23.40 208.50 L25.00 206.90 L25.00 208.50 Z" fill="#9a9a9a"/><path d="M23.40 228.40 L25.00 226.80 L25.00 228.40 Z" fill="#9a9a9a"/><path d="M23.40 249.50 L25.00 247.90 L25.00 249.50 Z" fill="#9a9a9a"/><path d="M23.40 304.00 L25.00 302.40 L25.00 304.00 Z" fill="#9a9a9a"/><path d="M23.40 322.00 L25.00 320.40 L25.00 322.00 Z" fill="#9a9a9a"/><path d="M23.40 340.00 L25.00 338.40 L25.00 340.00 Z" fill="#9a9a9a"/><path d="M23.40 358.50 L25.00 356.90 L25.00 358.50 Z" fill="#9a9a9a"/><path d="M23.40 376.00 L25.00 374.40 L25.00 376.00 Z" fill="#9a9a9a"/><path d="M23.40 394.00 L25.00 392.40 L25.00 394.00 Z" fill="#9a9a9a"/><path d="M23.40 412.50 L25.00 410.90 L25.00 412.50 Z" fill="#9a9a9a"/><path d="M23.40 430.50 L25.00 428.90 L25.00 430.50 Z" fill="#9a9a9a"/><path d="M23.40 447.70 L25.00 446.10 L25.00 447.70 Z" fill="#9a9a9a"/><text x="35.00" y="66.80" font-size="5.65" fill="#e8e8e8" text-anchor="start" >Front Orthographic</text><text x="35.00" y="76.30" font-size="5.65" fill="#e8e8e8" text-anchor="start" >(1) Plane</text><text x="35.00" y="85.80" font-size="5.65" fill="#e8e8e8" text-anchor="start" >10 Centimeters</text><path d="M500.7 65.0 V80.4" stroke="#3d8ce0" stroke-width="1.3"/><path d="M500.7 80.4 V95.7" stroke="#3d8ce0" stroke-width="1.3"/><path d="M500.7 80.4 H516.4" stroke="#e0304a" stroke-width="1.3"/><path d="M485.2 80.4 H500.7" stroke="#e0304a" stroke-width="1.3"/><circle cx="485.2" cy="80.4" r="4.1" fill="#a23a48" stroke="#d83a52" stroke-width="0.8"/><circle cx="500.7" cy="95.7" r="4.1" fill="#2d5a90" stroke="#3580d0" stroke-width="0.8"/><circle cx="500.7" cy="80.4" r="4.6" fill="#7fd01e"/><text x="500.70" y="82.30" font-size="5" fill="#2a3a10" text-anchor="middle" font-weight="bold">Y</text><circle cx="500.7" cy="65.0" r="4.1" fill="#2f80d8"/><text x="500.70" y="66.90" font-size="5" fill="#0e2440" text-anchor="middle" font-weight="bold">Z</text><circle cx="516.4" cy="80.4" r="4.1" fill="#e8304c"/><text x="516.40" y="82.30" font-size="5" fill="#3a0a12" text-anchor="middle" font-weight="bold">X</text><!--sidetab--><path d="M524.6 63.5 h-2 a1.5 1.5 0 0 0 -1.5 1.5 v5 a1.5 1.5 0 0 0 1.5 1.5 h2 z" fill="#2a2a2a"/><path d="M523.5 65.5 l-1.3 2 l1.3 2" stroke="#aaa" stroke-width="0.6" fill="none"/><circle cx="513.9" cy="107.1" r="6.5" fill="#8a8a8a"/><circle cx="514.6999999999999" cy="106.3" r="2.6" fill="none" stroke="#e8e8e8" stroke-width="0.9"/><path d="M513.0 108.0 l-2.3 2.3" stroke="#e8e8e8" stroke-width="1.1"/><circle cx="513.9" cy="121.3" r="6.5" fill="#8a8a8a"/><path d="M511.4 124.3 v-4 l1 -1 v2 v-3.5 l1 -0.5 l0.5 3 v-3.5 l1 0 l0.5 3.5 l0.5 -3 l1 0.5 v4 l1 -1 v2 l-2 2.5 z" fill="#e8e8e8"/><circle cx="513.9" cy="135.7" r="6.5" fill="#8a8a8a"/><circle cx="512.4" cy="133.89999999999998" r="1.6" fill="#e8e8e8"/><circle cx="515.4" cy="133.89999999999998" r="1.6" fill="#e8e8e8"/><rect x="510.9" y="135.2" width="4.5" height="3" fill="#e8e8e8"/><path d="M515.4 136.7 l2.5 -1.5 v3.5 z" fill="#e8e8e8"/><circle cx="513.9" cy="150.6" r="6.5" fill="#8a8a8a"/><path d="M510.59999999999997 147.29999999999998 h6.6 v6.6 h-6.6 z M512.8 147.29999999999998 v6.6 M515.0 147.29999999999998 v6.6 M510.59999999999997 149.5 h6.6 M510.59999999999997 151.7 h6.6" stroke="#e8e8e8" stroke-width="0.6" fill="none"/></g><g clip-path="url(#clipR)"><rect x="527.5" y="29.5" width="502.5" height="587.9" fill="#3d3d3d"/><defs>
<linearGradient id="gridfade" gradientUnits="userSpaceOnUse" x1="0" y1="358" x2="0" y2="480">
<stop offset="0" stop-color="#fff" stop-opacity="0"/><stop offset="0.35" stop-color="#fff" stop-opacity="0.6"/><stop offset="1" stop-color="#fff" stop-opacity="1"/>
</linearGradient>
<mask id="gmask"><rect x="527" y="29" width="500" height="600" fill="url(#gridfade)"/></mask>
</defs><path d="M-2800.9 630.5 L470.3 374.4 M-2781.2 635.5 L478.1 374.4 M-2760.7 640.7 L485.8 374.3 M-2739.3 646.1 L493.6 374.3 M-2716.9 651.7 L501.4 374.3 M-2693.7 657.5 L509.3 374.3 M-2669.4 663.7 L517.2 374.3 M-2644.0 670.0 L525.1 374.3 M-2617.4 676.7 L533.0 374.3 M-2589.6 683.7 L541.0 374.3 M-2560.4 691.1 L549.0 374.2 M-2529.7 698.8 L557.0 374.2 M-2497.5 706.9 L565.1 374.2 M-2463.7 715.5 L573.1 374.2 M-2428.0 724.4 L581.3 374.2 M-2390.3 733.9 L589.4 374.2 M-2350.5 744.0 L597.6 374.2 M-2308.3 754.6 L605.8 374.2 M-2263.7 765.8 L614.0 374.1 M-2216.2 777.8 L622.3 374.1 M-2165.7 790.5 L630.6 374.1 M-2111.9 804.0 L638.9 374.1 M-2054.4 818.5 L647.3 374.1 M-1992.8 834.0 L655.7 374.1 M-1926.7 850.7 L664.1 374.1 M-1855.5 868.6 L672.5 374.1 M-1778.7 887.9 L681.0 374.0 M-1695.6 908.9 L689.5 374.0 M-1605.3 931.6 L698.1 374.0 M-1506.8 956.4 L706.7 374.0 M-1399.1 983.5 L715.3 374.0 M-1280.8 1013.3 L724.0 374.0 M-1150.1 1046.2 L732.6 374.0 M-1005.1 1082.8 L741.4 374.0 M-843.3 1123.5 L750.1 373.9 M-661.5 1169.3 L758.9 373.9 M-455.8 1221.1 L767.7 373.9 M-221.2 1280.2 L776.6 373.9 M48.9 1348.2 L785.5 373.9 M363.1 1427.3 L794.4 373.9 M733.4 1520.6 L803.3 373.9 M1176.1 1632.0 L812.3 373.9 M1714.7 1767.7 L821.4 373.8 M2384.4 1936.3 L830.4 373.8 M3239.5 2151.7 L839.5 373.8 M4369.4 2436.2 L848.7 373.8 M5931.8 2829.7 L857.8 373.8 M8234.0 3409.4 L867.0 373.8 M11964.5 4348.9 L876.3 373.8 M19049.8 6133.1 L885.6 373.7 M37713.0 10833.0 L894.9 373.7 M223063.7 57509.3 L904.2 373.7 M-69250.7 -16103.3 L913.6 373.7 M-32395.1 -6822.1 L923.1 373.7 M-22091.9 -4227.5 L932.5 373.7 M-17245.8 -3007.1 L942.0 373.7 M-14429.0 -2297.7 L951.6 373.6 M-12587.6 -1834.0 L961.2 373.6 M-11289.6 -1507.2 L970.8 373.6 M-10325.5 -1264.4 L980.4 373.6 M-9581.1 -1076.9 L990.1 373.6 M-8989.0 -927.8 L999.9 373.6 M-8506.8 -806.4 L1009.7 373.6 M-8106.5 -705.6 L1019.5 373.5 M-7768.9 -620.5 L1029.3 373.5 M-7480.2 -547.9 L1039.2 373.5 M-7230.7 -485.0 L1049.2 373.5 M-7012.7 -430.1 L1059.2 373.5 M-6820.8 -381.8 L1069.2 373.5 M-6650.4 -338.9 L1079.3 373.5 M-6498.2 -300.6 L1089.4 373.4 M-6361.4 -266.1 L1099.5 373.4 M-6237.8 -235.0 L1109.7 373.4 M-6125.5 -206.7 L1119.9 373.4 M-6023.1 -180.9 L1130.2 373.4 M-5929.3 -157.3 L1140.5 373.4 M-5843.0 -135.6 L1150.9 373.3 M-5763.5 -115.5 L1161.3 373.3 M-5689.9 -97.0 L1171.8 373.3 M-5621.6 -79.8 L1182.2 373.3 M-5558.0 -63.8 L1192.8 373.3 M520 900.2 L1030 961.6 M520 715.1 L1030 754.6 M520 623.2 L1030 651.8 M520 568.3 L1030 590.4 M520 531.7 L1030 549.6 M520 505.7 L1030 520.5 M520 486.2 L1030 498.6 M520 471.0 L1030 481.7 M520 458.9 L1030 468.1 M520 449.0 L1030 457.1 M520 440.7 L1030 447.8 M520 433.8 L1030 440.0 M520 427.8 L1030 433.3 M520 422.6 L1030 427.5 M520 418.1 L1030 422.5 M520 414.1 L1030 418.0 M520 410.5 L1030 414.0 M520 407.3 L1030 410.5 M520 404.5 L1030 407.3 M520 401.9 L1030 404.4 M520 399.5 L1030 401.7 M520 397.4 L1030 399.3 M520 395.4 L1030 397.1 M520 393.6 L1030 395.1 M520 391.9 L1030 393.2 M520 390.4 L1030 391.5 M520 388.9 L1030 389.9 M520 387.6 L1030 388.4 M520 386.4 L1030 387.0 M520 385.2 L1030 385.7 M520 384.1 L1030 384.5 M520 383.1 L1030 383.3 M520 382.1 L1030 382.3 M520 381.2 L1030 381.2 M520 380.3 L1030 380.3 M520 379.5 L1030 379.4 M520 378.7 L1030 378.5 M520 378.0 L1030 377.7 M520 377.3 L1030 376.9 M520 376.6 L1030 376.2 M520 376.0 L1030 375.5 M520 375.4 L1030 374.8 M520 374.8 L1030 374.1" stroke="#565656" stroke-width="0.75" fill="none" mask="url(#gmask)"/><path d="M799.6 436 L788.6 619" stroke="#7a9e34" stroke-width="0.9"/><defs>
<linearGradient id="gRv" gradientUnits="userSpaceOnUse" x1="0" y1="160" x2="0" y2="442">
<stop offset="0" stop-color="#5ac44e"/><stop offset="0.3" stop-color="#50c045"/><stop offset="0.62" stop-color="#44b836"/><stop offset="1" stop-color="#2e9f20"/>
</linearGradient>
<linearGradient id="gRh" gradientUnits="userSpaceOnUse" x1="624" y1="0" x2="700" y2="0">
<stop offset="0" stop-color="#1e7a12" stop-opacity="0.3"/><stop offset="1" stop-color="#1e7a12" stop-opacity="0"/>
</linearGradient>
<linearGradient id="gRo" gradientUnits="userSpaceOnUse" x1="735" y1="0" x2="775" y2="0">
<stop offset="0" stop-color="#a6e09c" stop-opacity="0"/><stop offset="1" stop-color="#a6e09c" stop-opacity="0.25"/>
</linearGradient>
<filter id="blurR" x="-50%" y="-50%" width="200%" height="200%"><feGaussianBlur stdDeviation="8"/></filter>
<clipPath id="blobR"><path d="M768.50 161.50 C776.50 160.77 783.08 160.08 790.00 160.50 C796.92 160.92 803.33 162.08 810.00 164.00 C816.67 165.92 824.17 169.00 830.00 172.00 C835.83 175.00 840.35 177.30 845.00 182.00 C849.65 186.70 853.52 193.45 857.90 200.20 C862.28 206.95 866.85 214.32 871.30 222.50 C875.75 230.68 880.15 240.38 884.60 249.30 C889.05 258.22 893.53 267.07 898.00 276.00 C902.47 284.93 907.67 294.70 911.40 302.90 C915.13 311.10 918.53 318.52 920.40 325.20 C922.27 331.88 922.60 337.05 922.60 343.00 C922.60 348.95 922.27 354.93 920.40 360.90 C918.53 366.87 915.87 372.85 911.40 378.80 C906.93 384.75 901.03 390.65 893.60 396.60 C886.17 402.55 875.73 409.67 866.80 414.50 C857.87 419.33 848.72 422.40 840.00 425.60 C831.28 428.80 822.83 431.55 814.50 433.70 C806.17 435.85 797.67 437.70 790.00 438.50 C782.33 439.30 775.37 438.83 768.50 438.50 C761.63 438.17 756.88 437.72 748.80 436.50 C740.72 435.28 728.90 433.40 720.00 431.20 C711.10 429.00 702.72 426.22 695.40 423.30 C688.08 420.38 682.53 417.65 676.10 413.70 C669.67 409.75 662.35 404.28 656.80 399.60 C651.25 394.92 646.88 390.27 642.80 385.60 C638.72 380.93 634.93 376.28 632.30 371.60 C629.67 366.92 628.17 362.77 627.00 357.50 C625.83 352.23 624.88 346.57 625.30 340.00 C625.72 333.43 627.67 324.90 629.50 318.10 C631.33 311.30 633.37 305.97 636.30 299.20 C639.23 292.43 643.93 284.28 647.10 277.50 C650.27 270.72 653.03 264.38 655.30 258.50 C657.57 252.62 658.00 248.53 660.70 242.20 C663.40 235.87 667.43 227.28 671.50 220.50 C675.57 213.72 680.12 207.37 685.10 201.50 C690.08 195.63 695.08 190.27 701.40 185.30 C707.72 180.33 716.23 175.10 723.00 171.70 C729.77 168.30 734.42 166.60 742.00 164.90 C749.58 163.20 760.50 162.23 768.50 161.50 Z"/></clipPath>
</defs><path d="M768.50 161.50 C776.50 160.77 783.08 160.08 790.00 160.50 C796.92 160.92 803.33 162.08 810.00 164.00 C816.67 165.92 824.17 169.00 830.00 172.00 C835.83 175.00 840.35 177.30 845.00 182.00 C849.65 186.70 853.52 193.45 857.90 200.20 C862.28 206.95 866.85 214.32 871.30 222.50 C875.75 230.68 880.15 240.38 884.60 249.30 C889.05 258.22 893.53 267.07 898.00 276.00 C902.47 284.93 907.67 294.70 911.40 302.90 C915.13 311.10 918.53 318.52 920.40 325.20 C922.27 331.88 922.60 337.05 922.60 343.00 C922.60 348.95 922.27 354.93 920.40 360.90 C918.53 366.87 915.87 372.85 911.40 378.80 C906.93 384.75 901.03 390.65 893.60 396.60 C886.17 402.55 875.73 409.67 866.80 414.50 C857.87 419.33 848.72 422.40 840.00 425.60 C831.28 428.80 822.83 431.55 814.50 433.70 C806.17 435.85 797.67 437.70 790.00 438.50 C782.33 439.30 775.37 438.83 768.50 438.50 C761.63 438.17 756.88 437.72 748.80 436.50 C740.72 435.28 728.90 433.40 720.00 431.20 C711.10 429.00 702.72 426.22 695.40 423.30 C688.08 420.38 682.53 417.65 676.10 413.70 C669.67 409.75 662.35 404.28 656.80 399.60 C651.25 394.92 646.88 390.27 642.80 385.60 C638.72 380.93 634.93 376.28 632.30 371.60 C629.67 366.92 628.17 362.77 627.00 357.50 C625.83 352.23 624.88 346.57 625.30 340.00 C625.72 333.43 627.67 324.90 629.50 318.10 C631.33 311.30 633.37 305.97 636.30 299.20 C639.23 292.43 643.93 284.28 647.10 277.50 C650.27 270.72 653.03 264.38 655.30 258.50 C657.57 252.62 658.00 248.53 660.70 242.20 C663.40 235.87 667.43 227.28 671.50 220.50 C675.57 213.72 680.12 207.37 685.10 201.50 C690.08 195.63 695.08 190.27 701.40 185.30 C707.72 180.33 716.23 175.10 723.00 171.70 C729.77 168.30 734.42 166.60 742.00 164.90 C749.58 163.20 760.50 162.23 768.50 161.50 Z" fill="url(#gRv)"/><g clip-path="url(#blobR)"><rect x="620" y="150" width="90" height="300" fill="url(#gRh)"/><ellipse cx="725" cy="270" rx="22" ry="90" fill="#7fd474" opacity="0.3" filter="url(#blurR)"/><ellipse cx="670" cy="410" rx="60" ry="25" fill="#1f8a14" opacity="0.25" filter="url(#blurR)"/><rect x="735" y="150" width="220" height="300" fill="url(#gRo)"/><ellipse cx="800" cy="340" rx="30" ry="45" fill="#b0e8a0" opacity="0.25" filter="url(#blurR)"/><ellipse cx="850" cy="220" rx="30" ry="30" fill="#b0e8a0" opacity="0.2" filter="url(#blurR)"/></g><ellipse cx="691.4" cy="245.7" rx="5.5" ry="4.5" fill="#3aa030"/><ellipse cx="760" cy="400" rx="42" ry="4.8" fill="#a8e0a0" opacity="0.75"/><path d="M769.10 160.20 L766.60 164.50 L764.00 181.10 L762.80 203.00 L760.00 235.00 L757.70 272.00 L754.80 315.00 L754.00 347.90 L754.80 378.00 L756.60 400.20 L757.30 407.90 L759.10 420.10 L761.20 430.80 L764.20 434.10 L770.10 439.20" fill="none" stroke="#101010" stroke-width="0.5" opacity="0.65"/><path d="M781.10 161.50 L780.10 163.50 L778.00 181.10 L776.80 202.30 L775.50 233.70 L774.20 272.00 L772.40 314.70 L771.90 347.40 L772.40 374.20 L771.90 395.10 L768.60 406.10 L771.90 419.60 L777.00 429.00 L770.10 439.20" fill="none" stroke="#101010" stroke-width="0.5" opacity="0.65"/><path d="M791.30 160.20 L790.30 164.50 L789.50 181.10 L789.50 203.00 L788.30 234.70 L788.30 272.40 L786.70 318.00 L786.70 350.70 L786.70 375.00 L785.90 395.90 L780.00 404.80 L783.40 418.00 L793.60 427.80 L785.90 435.90" fill="none" stroke="#101010" stroke-width="0.5" opacity="0.65"/><path d="M802.30 162.00 L802.30 165.80 L802.30 181.10 L802.30 203.00 L802.30 236.70 L802.30 273.70 L802.00 318.80 L802.00 350.70 L802.00 376.70 L802.50 398.40 L793.60 403.50" fill="none" stroke="#101010" stroke-width="0.5" opacity="0.65"/><path d="M769.10 160.20 L781.10 161.50 L791.30 160.20 L802.30 162.00 L818.90 168.60 L846.90 180.10 L857.10 196.70 L868.60 213.80 L878.80 226.50 L886.50 252.00 L901.80 275.00 L908.20 291.60 L917.30 335.90 L925.00 340.50 L931.80 342.80 L914.00 383.90 L893.00 397.00 L861.70 418.00 L840.80 420.10 L821.60 434.10 L800.00 438.00 L785.90 435.90 L770.10 439.20" fill="none" stroke="#101010" stroke-width="0.5" opacity="0.65"/><path d="M766.60 164.50 L780.10 163.50 L790.30 164.50 L802.30 165.80 L821.40 174.20 L846.90 180.10" fill="none" stroke="#101010" stroke-width="0.5" opacity="0.65"/><path d="M764.00 181.10 L778.00 181.10 L789.50 181.10 L802.30 181.10 L823.20 187.00 L858.40 199.70" fill="none" stroke="#101010" stroke-width="0.5" opacity="0.65"/><path d="M762.80 203.00 L776.80 202.30 L789.50 203.00 L802.30 203.00" fill="none" stroke="#101010" stroke-width="0.5" opacity="0.65"/><path d="M802.30 165.80 L821.40 174.20 L823.20 187.00 L823.20 196.70" fill="none" stroke="#101010" stroke-width="0.5" opacity="0.65"/><path d="M775.50 233.70 L788.30 234.70 L802.30 236.70" fill="none" stroke="#101010" stroke-width="0.5" opacity="0.65"/><path d="M757.70 272.00 L774.20 272.00 L788.30 272.40 L802.30 273.70 L824.50 282.10 L845.70 283.90 L866.10 286.00 L908.20 291.60" fill="none" stroke="#101010" stroke-width="0.5" opacity="0.65"/><path d="M754.80 315.00 L772.40 314.70 L786.70 318.00 L802.00 318.80 L823.40 321.90 L861.70 325.00 L895.10 330.00 L917.30 335.90" fill="none" stroke="#101010" stroke-width="0.5" opacity="0.65"/><path d="M802.30 273.70 L802.00 318.80" fill="none" stroke="#101010" stroke-width="0.5" opacity="0.65"/><path d="M824.50 282.10 L823.40 321.90 L830.60 372.90" fill="none" stroke="#101010" stroke-width="0.5" opacity="0.65"/><path d="M845.70 283.90 L861.70 325.00 L846.40 378.00" fill="none" stroke="#101010" stroke-width="0.5" opacity="0.65"/><path d="M866.10 286.00 L895.10 330.00 L862.40 383.10" fill="none" stroke="#101010" stroke-width="0.5" opacity="0.65"/><path d="M908.20 291.60 L917.30 335.90 L896.90 382.30" fill="none" stroke="#101010" stroke-width="0.5" opacity="0.65"/><path d="M754.00 347.90 L771.90 347.40 L786.70 350.70 L802.00 350.70 L830.60 372.90 L846.40 378.00 L862.40 383.10 L896.90 382.30 L910.90 381.30 L914.00 383.90" fill="none" stroke="#101010" stroke-width="0.5" opacity="0.65"/><path d="M754.80 378.00 L772.40 374.20 L786.70 375.00 L802.00 376.70 L815.80 385.70" fill="none" stroke="#101010" stroke-width="0.5" opacity="0.65"/><path d="M756.60 400.20 L771.90 395.10 L785.90 395.90 L794.80 396.60 L802.50 398.40" fill="none" stroke="#101010" stroke-width="0.5" opacity="0.65"/><path d="M757.30 407.90 L768.60 406.10 L780.00 404.80 L793.60 403.50 L813.50 404.00 L828.00 409.90 L834.40 415.00 L840.80 420.10 L851.50 419.60 L861.70 418.00" fill="none" stroke="#101010" stroke-width="0.5" opacity="0.65"/><path d="M759.10 420.10 L771.90 419.60 L783.40 418.00 L800.50 410.40 L815.80 385.70 L830.60 372.90" fill="none" stroke="#101010" stroke-width="0.5" opacity="0.65"/><path d="M761.20 430.80 L777.00 429.00 L793.60 427.80 L810.20 421.40 L828.00 409.90 L846.40 378.00" fill="none" stroke="#101010" stroke-width="0.5" opacity="0.65"/><path d="M800.00 438.00 L810.20 421.40" fill="none" stroke="#101010" stroke-width="0.5" opacity="0.65"/><path d="M821.60 434.10 L834.40 415.00 L862.40 383.10" fill="none" stroke="#101010" stroke-width="0.5" opacity="0.65"/><path d="M813.50 404.00 L815.80 385.70" fill="none" stroke="#101010" stroke-width="0.5" opacity="0.65"/><path d="M851.50 419.60 L896.90 382.30" fill="none" stroke="#101010" stroke-width="0.5" opacity="0.65"/><path d="M802.30 203.00 L823.20 196.70 L858.40 199.70 L868.60 213.80" fill="none" stroke="#101010" stroke-width="0.5" opacity="0.65"/><path d="M839.30 241.80 L802.30 203.00" fill="none" stroke="#101010" stroke-width="0.5" opacity="0.65"/><path d="M839.30 241.80 L823.20 196.70" fill="none" stroke="#101010" stroke-width="0.5" opacity="0.65"/><path d="M839.30 241.80 L858.40 199.70" fill="none" stroke="#101010" stroke-width="0.5" opacity="0.65"/><path d="M839.30 241.80 L868.60 213.80" fill="none" stroke="#101010" stroke-width="0.5" opacity="0.65"/><path d="M839.30 241.80 L878.80 226.50" fill="none" stroke="#101010" stroke-width="0.5" opacity="0.65"/><path d="M839.30 241.80 L878.80 248.20" fill="none" stroke="#101010" stroke-width="0.5" opacity="0.65"/><path d="M839.30 241.80 L880.10 267.90" fill="none" stroke="#101010" stroke-width="0.5" opacity="0.65"/><path d="M839.30 241.80 L866.10 286.00" fill="none" stroke="#101010" stroke-width="0.5" opacity="0.65"/><path d="M839.30 241.80 L845.70 283.90" fill="none" stroke="#101010" stroke-width="0.5" opacity="0.65"/><path d="M839.30 241.80 L824.50 282.10" fill="none" stroke="#101010" stroke-width="0.5" opacity="0.65"/><path d="M839.30 241.80 L818.90 259.70" fill="none" stroke="#101010" stroke-width="0.5" opacity="0.65"/><path d="M878.80 248.20 L886.50 252.00" fill="none" stroke="#101010" stroke-width="0.5" opacity="0.65"/><path d="M880.10 267.90 L901.80 275.00" fill="none" stroke="#101010" stroke-width="0.5" opacity="0.65"/><path d="M802.3 203 L823.2 196.7 L858.4 199.7" stroke="#d07a20" stroke-width="0.6" fill="none"/><ellipse cx="839.3" cy="241.8" rx="5.2" ry="3.6" fill="#2e8a22" stroke="#0a0a0a" stroke-width="1.8" stroke-dasharray="1.4 0.6"/><circle cx="861.7" cy="418.0" r="1.2" fill="#0a0a0a"/><circle cx="840.8" cy="420.1" r="1.2" fill="#0a0a0a"/><circle cx="757.7" cy="272.0" r="1.2" fill="#0a0a0a"/><circle cx="802.3" cy="181.1" r="1.2" fill="#0a0a0a"/><circle cx="769.1" cy="160.2" r="1.2" fill="#0a0a0a"/><circle cx="759.1" cy="420.1" r="1.2" fill="#0a0a0a"/><circle cx="775.5" cy="233.7" r="1.2" fill="#0a0a0a"/><circle cx="802.3" cy="236.7" r="1.2" fill="#0a0a0a"/><circle cx="862.4" cy="383.1" r="1.2" fill="#0a0a0a"/><circle cx="761.2" cy="430.8" r="1.2" fill="#0a0a0a"/><circle cx="772.4" cy="314.7" r="1.2" fill="#0a0a0a"/><circle cx="845.7" cy="283.9" r="1.2" fill="#0a0a0a"/><circle cx="771.9" cy="419.6" r="1.2" fill="#0a0a0a"/><circle cx="766.6" cy="164.5" r="1.2" fill="#0a0a0a"/><circle cx="754.8" cy="315.0" r="1.2" fill="#0a0a0a"/><circle cx="868.6" cy="213.8" r="1.2" fill="#0a0a0a"/><circle cx="813.5" cy="404.0" r="1.2" fill="#0a0a0a"/><circle cx="878.8" cy="248.2" r="1.2" fill="#0a0a0a"/><circle cx="802.5" cy="398.4" r="1.2" fill="#0a0a0a"/><circle cx="802.3" cy="203.0" r="1.2" fill="#0a0a0a"/><circle cx="793.6" cy="403.5" r="1.2" fill="#0a0a0a"/><circle cx="893.0" cy="397.0" r="1.2" fill="#0a0a0a"/><circle cx="925.0" cy="340.5" r="1.2" fill="#0a0a0a"/><circle cx="756.6" cy="400.2" r="1.2" fill="#0a0a0a"/><circle cx="821.6" cy="434.1" r="1.2" fill="#0a0a0a"/><circle cx="764.2" cy="434.1" r="1.2" fill="#0a0a0a"/><circle cx="818.9" cy="259.7" r="1.2" fill="#0a0a0a"/><circle cx="802.3" cy="162.0" r="1.2" fill="#0a0a0a"/><circle cx="802.0" cy="350.7" r="1.2" fill="#0a0a0a"/><circle cx="791.3" cy="160.2" r="1.2" fill="#0a0a0a"/><circle cx="754.0" cy="347.9" r="1.2" fill="#0a0a0a"/><circle cx="917.3" cy="335.9" r="1.2" fill="#0a0a0a"/><circle cx="788.3" cy="234.7" r="1.2" fill="#0a0a0a"/><circle cx="823.4" cy="321.9" r="1.2" fill="#0a0a0a"/><circle cx="878.8" cy="226.5" r="1.2" fill="#0a0a0a"/><circle cx="896.9" cy="382.3" r="1.2" fill="#0a0a0a"/><circle cx="815.8" cy="385.7" r="1.2" fill="#0a0a0a"/><circle cx="866.1" cy="286.0" r="1.2" fill="#0a0a0a"/><circle cx="793.6" cy="427.8" r="1.2" fill="#0a0a0a"/><circle cx="764.0" cy="181.1" r="1.2" fill="#0a0a0a"/><circle cx="783.4" cy="418.0" r="1.2" fill="#0a0a0a"/><circle cx="800.0" cy="438.0" r="1.2" fill="#0a0a0a"/><circle cx="901.8" cy="275.0" r="1.2" fill="#0a0a0a"/><circle cx="786.7" cy="318.0" r="1.2" fill="#0a0a0a"/><circle cx="789.5" cy="181.1" r="1.2" fill="#0a0a0a"/><circle cx="821.4" cy="174.2" r="1.2" fill="#0a0a0a"/><circle cx="776.8" cy="202.3" r="1.2" fill="#0a0a0a"/><circle cx="785.9" cy="395.9" r="1.2" fill="#0a0a0a"/><circle cx="786.7" cy="375.0" r="1.2" fill="#0a0a0a"/><circle cx="886.5" cy="252.0" r="1.2" fill="#0a0a0a"/><circle cx="768.6" cy="406.1" r="1.2" fill="#0a0a0a"/><circle cx="823.2" cy="187.0" r="1.2" fill="#0a0a0a"/><circle cx="846.4" cy="378.0" r="1.2" fill="#0a0a0a"/><circle cx="770.1" cy="439.2" r="1.2" fill="#0a0a0a"/><circle cx="757.3" cy="407.9" r="1.2" fill="#0a0a0a"/><circle cx="771.9" cy="395.1" r="1.2" fill="#0a0a0a"/><circle cx="760.0" cy="235.0" r="1.2" fill="#0a0a0a"/><circle cx="910.9" cy="381.3" r="1.2" fill="#0a0a0a"/><circle cx="861.7" cy="325.0" r="1.2" fill="#0a0a0a"/><circle cx="800.5" cy="410.4" r="1.2" fill="#0a0a0a"/><circle cx="834.4" cy="415.0" r="1.2" fill="#0a0a0a"/><circle cx="774.2" cy="272.0" r="1.2" fill="#0a0a0a"/><circle cx="772.4" cy="374.2" r="1.2" fill="#0a0a0a"/><circle cx="908.2" cy="291.6" r="1.2" fill="#0a0a0a"/><circle cx="802.3" cy="165.8" r="1.2" fill="#0a0a0a"/><circle cx="895.1" cy="330.0" r="1.2" fill="#0a0a0a"/><circle cx="786.7" cy="350.7" r="1.2" fill="#0a0a0a"/><circle cx="780.1" cy="163.5" r="1.2" fill="#0a0a0a"/><circle cx="858.4" cy="199.7" r="1.2" fill="#0a0a0a"/><circle cx="790.3" cy="164.5" r="1.2" fill="#0a0a0a"/><circle cx="754.8" cy="378.0" r="1.2" fill="#0a0a0a"/><circle cx="778.0" cy="181.1" r="1.2" fill="#0a0a0a"/><circle cx="771.9" cy="347.4" r="1.2" fill="#0a0a0a"/><circle cx="846.9" cy="180.1" r="1.2" fill="#0a0a0a"/><circle cx="777.0" cy="429.0" r="1.2" fill="#0a0a0a"/><circle cx="802.3" cy="273.7" r="1.2" fill="#0a0a0a"/><circle cx="880.1" cy="267.9" r="1.2" fill="#0a0a0a"/><circle cx="788.3" cy="272.4" r="1.2" fill="#0a0a0a"/><circle cx="830.6" cy="372.9" r="1.2" fill="#0a0a0a"/><circle cx="810.2" cy="421.4" r="1.2" fill="#0a0a0a"/><circle cx="780.0" cy="404.8" r="1.2" fill="#0a0a0a"/><circle cx="828.0" cy="409.9" r="1.2" fill="#0a0a0a"/><circle cx="857.1" cy="196.7" r="1.2" fill="#0a0a0a"/><circle cx="789.5" cy="203.0" r="1.2" fill="#0a0a0a"/><circle cx="851.5" cy="419.6" r="1.2" fill="#0a0a0a"/><circle cx="762.8" cy="203.0" r="1.2" fill="#0a0a0a"/><circle cx="824.5" cy="282.1" r="1.2" fill="#0a0a0a"/><circle cx="802.0" cy="376.7" r="1.2" fill="#0a0a0a"/><circle cx="818.9" cy="168.6" r="1.2" fill="#0a0a0a"/><circle cx="823.2" cy="196.7" r="1.2" fill="#0a0a0a"/><circle cx="802.0" cy="318.8" r="1.2" fill="#0a0a0a"/><circle cx="931.8" cy="342.8" r="1.2" fill="#0a0a0a"/><circle cx="785.9" cy="435.9" r="1.2" fill="#0a0a0a"/><circle cx="794.8" cy="396.6" r="1.2" fill="#0a0a0a"/><circle cx="914.0" cy="383.9" r="1.2" fill="#0a0a0a"/><circle cx="781.1" cy="161.5" r="1.2" fill="#0a0a0a"/><circle cx="770.6" cy="364" r="1.3" fill="#f0a020"/><rect x="527.5" y="29.5" width="502.5" height="13.5" fill="#303030"/><rect x="531.50" y="31.80" width="15.20" height="10.20" rx="1.5" fill="#282828" /><circle cx="538.4" cy="35.4" r="1.6" fill="#d0d0d0"/><path d="M533.9 39.4 h7 M534.9 37.4 h2" stroke="#c0c0c0" stroke-width="0.8"/><path d="M541.50 36.20 L543.70 38.20 L545.90 36.20" stroke="#c8c8c8" stroke-width="0.8" fill="none"/><rect x="552.30" y="31.80" width="11.40" height="10.20" rx="1.5" fill="#282828" /><rect x="553.3" y="32.6" width="9.4" height="8.6" fill="none" stroke="#d4962a" stroke-width="0.9" stroke-dasharray="1.3 0.9" rx="1"/><path d="M556.6999999999999 34.5 L556.6999999999999 39.3 L560.4 37.199999999999996 Z" fill="#e8e8e8"/><rect x="572.40" y="31.80" width="9.14" height="10.20" rx="1" fill="#4772b3" /><rect x="573.37" y="33.30" width="7.2" height="7.2" fill="none" stroke="#e8eef8" stroke-width="0.9" stroke-dasharray="1.1 0.7"/><rect x="582.14" y="31.80" width="9.14" height="10.20" rx="1" fill="#3a3a3a" /><rect x="582.91" y="35.70" width="5" height="5" fill="#d8d8d8"/><rect x="585.51" y="33.10" width="5" height="5" fill="#d8d8d8"/><rect x="591.88" y="31.80" width="9.14" height="10.20" rx="1" fill="#3a3a3a" /><path d="M592.65 35.70 h2.6 v-2.6 h5 v5 h-2.6 v2.6 h-5 z" fill="#d8d8d8"/><rect x="592.65" y="33.10" width="2" height="2" fill="#888"/><rect x="601.62" y="31.80" width="9.14" height="10.20" rx="1" fill="#3a3a3a" /><rect x="602.79" y="33.50" width="6.8" height="6.8" fill="none" stroke="#d8d8d8" stroke-width="1.6"/><rect x="604.89" y="35.60" width="2.6" height="2.6" fill="#444"/><rect x="611.36" y="31.80" width="9.14" height="10.20" rx="1" fill="#3a3a3a" /><rect x="612.33" y="33.30" width="7.2" height="7.2" fill="none" stroke="#b8b8b8" stroke-width="0.8" stroke-dasharray="1.1 0.7"/><rect x="613.93" y="34.90" width="4" height="4" fill="#d8d8d8"/><rect x="711.00" y="31.80" width="41.00" height="10.20" rx="1.5" fill="#282828" /><path d="M714 33.8 v6 h6" stroke="#c8c8c8" stroke-width="0.8" fill="none"/><text x="724.00" y="39.00" font-size="5.65" fill="#d8d8d8" text-anchor="start" >Global</text><path d="M745.80 36.20 L748.00 38.20 L750.20 36.20" stroke="#c8c8c8" stroke-width="0.8" fill="none"/><rect x="755.60" y="31.80" width="16.00" height="10.20" rx="1.5" fill="#282828" /><circle cx="760.5" cy="36.9" r="2.8" fill="none" stroke="#c8c8c8" stroke-width="0.9"/><path d="M765.30 36.20 L767.50 38.20 L769.70 36.20" stroke="#c8c8c8" stroke-width="0.8" fill="none"/><rect x="775.70" y="31.80" width="24.60" height="10.20" rx="1.5" fill="#282828" /><rect x="775.70" y="31.80" width="8.80" height="10.20" rx="1.2" fill="#4a4a4a" /><circle cx="780.1" cy="36.9" r="3.2" fill="none" stroke="#7a7a7a" stroke-width="1"/><path d="M788 38.9 h6 M788 36.9 v3 M794 36.9 v3" stroke="#d0d0d0" stroke-width="0.8"/><circle cx="793" cy="34.4" r="0.9" fill="#ffffff"/><path d="M795.30 36.20 L797.50 38.20 L799.70 36.20" stroke="#c8c8c8" stroke-width="0.8" fill="none"/><rect x="804.40" y="31.80" width="24.60" height="10.20" rx="1.5" fill="#282828" /><rect x="804.40" y="31.80" width="8.60" height="10.20" rx="1.2" fill="#4a4a4a" /><circle cx="808.7" cy="36.9" r="2.6" fill="#666"/><circle cx="808.7" cy="36.9" r="1" fill="#e0e0e0"/><path d="M815.5 40.4 Q819 30.9 822.5 40.4" stroke="#c8c8c8" stroke-width="0.8" fill="none"/><path d="M824.00 36.20 L826.20 38.20 L828.40 36.20" stroke="#777" stroke-width="0.8" fill="none"/><path d="M938.5 34.3 l3 1.5 v4 l-3 1.5 M946.0 34.3 l-3 1.5 v4 l3 1.5 M942.25 32.8 v8" stroke="#c8c8c8" stroke-width="0.8" fill="none"/><rect x="948.50" y="31.80" width="7.60" height="10.20" rx="1" fill="#3c3c3c" /><text x="952.30" y="38.90" font-size="5.5" fill="#bdbdbd" text-anchor="middle" >X</text><rect x="956.50" y="31.80" width="7.60" height="10.20" rx="1" fill="#3c3c3c" /><text x="960.30" y="38.90" font-size="5.5" fill="#bdbdbd" text-anchor="middle" >Y</text><rect x="964.50" y="31.80" width="7.60" height="10.20" rx="1" fill="#3c3c3c" /><text x="968.30" y="38.90" font-size="5.5" fill="#bdbdbd" text-anchor="middle" >Z</text><rect x="976.50" y="31.80" width="9.50" height="10.20" rx="1" fill="#3c3c3c" /><path d="M978.5 40.0 L984.0 33.8" stroke="#888" stroke-width="1.2"/><rect x="989.50" y="31.80" width="30.70" height="10.20" rx="1.5" fill="#282828" /><text x="992.00" y="39.00" font-size="5.65" fill="#d8d8d8" text-anchor="start" >Options</text><path d="M1014.30 36.20 L1016.50 38.20 L1018.70 36.20" stroke="#c8c8c8" stroke-width="0.8" fill="none"/><rect x="531.50" y="45.30" width="55.90" height="8.80" rx="1.5" fill="#282828" /><rect x="533.6999999999999" y="47.099999999999994" width="5" height="5" fill="none" stroke="#c8c8c8" stroke-width="0.8"/><circle cx="538.9" cy="47.099999999999994" r="1.3" fill="#ffffff"/><text x="543.90" y="51.80" font-size="5.65" fill="#d8d8d8" text-anchor="start" >Edit Mode</text><path d="M581.70 49.00 L583.90 51.00 L586.10 49.00" stroke="#c8c8c8" stroke-width="0.8" fill="none"/><rect x="591.10" y="45.30" width="8.90" height="8.80" rx="1" fill="#4772b3" /><rect x="600.40" y="45.30" width="8.90" height="8.80" rx="1" fill="#3a3a3a" /><rect x="609.70" y="45.30" width="8.90" height="8.80" rx="1" fill="#3a3a3a" /><rect x="593.0" y="46.9" width="5.4" height="5.2" fill="none" stroke="#e8eef8" stroke-width="0.8"/><circle cx="593.1999999999999" cy="48.3" r="1" fill="#ffffff"/><rect x="602.1999999999999" y="46.9" width="5.4" height="5.2" fill="none" stroke="#9a9a9a" stroke-width="0.8"/><path d="M604.9 46.9 v5.2" stroke="#e0e0e0" stroke-width="0.9"/><rect x="611.6" y="46.9" width="5.4" height="5.2" fill="#c8c8c8"/><rect x="623.40" y="45.30" width="16.50" height="8.80" rx="1.5" fill="#2c2c2c" /><text x="631.65" y="51.80" font-size="5.65" fill="#d8d8d8" text-anchor="middle" >View</text><rect x="643.70" y="45.30" width="20.30" height="8.80" rx="1.5" fill="#2c2c2c" /><text x="653.85" y="51.80" font-size="5.65" fill="#d8d8d8" text-anchor="middle" >Select</text><rect x="666.40" y="45.30" width="15.40" height="8.80" rx="1.5" fill="#2c2c2c" /><text x="674.10" y="51.80" font-size="5.65" fill="#d8d8d8" text-anchor="middle" >Add</text><rect x="684.40" y="45.30" width="19.00" height="8.80" rx="1.5" fill="#2c2c2c" /><text x="693.90" y="51.80" font-size="5.65" fill="#d8d8d8" text-anchor="middle" >Mesh</text><rect x="705.90" y="45.30" width="21.50" height="8.80" rx="1.5" fill="#2c2c2c" /><text x="716.65" y="51.80" font-size="5.65" fill="#d8d8d8" text-anchor="middle" >Vertex</text><rect x="729.40" y="45.30" width="18.40" height="8.80" rx="1.5" fill="#2c2c2c" /><text x="738.60" y="51.80" font-size="5.65" fill="#d8d8d8" text-anchor="middle" >Edge</text><rect x="750.30" y="45.30" width="17.80" height="8.80" rx="1.5" fill="#2c2c2c" /><text x="759.20" y="51.80" font-size="5.65" fill="#d8d8d8" text-anchor="middle" >Face</text><rect x="770.40" y="45.30" width="12.00" height="8.80" rx="1.5" fill="#2c2c2c" /><text x="776.40" y="51.80" font-size="5.65" fill="#d8d8d8" text-anchor="middle" >UV</text><rect x="789.40" y="45.30" width="8.20" height="8.80" rx="1" fill="#4772b3" /><rect x="791.4" y="47.3" width="4.2" height="4.6" fill="#ffffff"/><rect x="797.90" y="45.30" width="9.60" height="8.80" rx="1" fill="#3a3a3a" /><circle cx="802.6999999999999" cy="49.7" r="3" fill="#bdbdbd"/><circle cx="803.6999999999999" cy="49.2" r="1.5" fill="#555"/><rect x="807.70" y="45.30" width="9.60" height="8.80" rx="1" fill="#3a3a3a" /><circle cx="812.4999999999999" cy="49.7" r="3" fill="#bdbdbd"/><circle cx="813.4999999999999" cy="49.2" r="1.5" fill="#555"/><rect x="817.50" y="45.30" width="9.60" height="8.80" rx="1" fill="#3a3a3a" /><circle cx="822.3" cy="49.7" r="3" fill="#bdbdbd"/><circle cx="823.3" cy="49.2" r="1.5" fill="#555"/><rect x="827.30" y="45.30" width="9.60" height="8.80" rx="1" fill="#3a3a3a" /><circle cx="832.0999999999999" cy="49.7" r="3" fill="#bdbdbd"/><circle cx="833.0999999999999" cy="49.2" r="1.5" fill="#555"/><rect x="837.80" y="45.30" width="56.90" height="8.80" rx="1.5" fill="#1d1d1d" /><circle cx="842.4" cy="48.900000000000006" r="2" fill="none" stroke="#d0d0d0" stroke-width="0.8"/><path d="M840.9 50.5 l-2 2.3" stroke="#d0d0d0" stroke-width="0.9"/><rect x="895.40" y="45.30" width="9.00" height="8.80" rx="1" fill="#555555" /><path d="M897.70 49.00 L899.90 51.00 L902.10 49.00" stroke="#9a9a9a" stroke-width="0.8" fill="none"/><rect x="913.50" y="45.30" width="16.50" height="8.80" rx="1.5" fill="#282828" /><rect x="941.30" y="45.30" width="9.70" height="8.80" rx="1.5" fill="#282828" /><rect x="964.50" y="45.30" width="9.70" height="8.80" rx="1.5" fill="#282828" /><path d="M916 48.7 l6 -2 l3 2 l-4 4 z" fill="#c8c8c8"/><path d="M923.80 49.20 L926.00 51.20 L928.20 49.20" stroke="#c8c8c8" stroke-width="0.8" fill="none"/><rect x="932.20" y="45.30" width="9.10" height="8.80" rx="1" fill="#4772b3" /><path d="M934 52.6 L939.5 46.8 M934 47.3 q3 0 5.5 5" stroke="#ffffff" stroke-width="0.8" fill="none"/><path d="M943.80 49.00 L946.00 51.00 L948.20 49.00" stroke="#c8c8c8" stroke-width="0.8" fill="none"/><rect x="955.80" y="45.30" width="8.70" height="8.80" rx="1" fill="#4772b3" /><circle cx="960" cy="49.7" r="3" fill="#dfe6f0"/><circle cx="961" cy="50.2" r="1.6" fill="#4772b3"/><path d="M967.30 49.00 L969.50 51.00 L971.70 49.00" stroke="#c8c8c8" stroke-width="0.8" fill="none"/><rect x="978.20" y="45.30" width="9.60" height="8.80" rx="1" fill="#3a3a3a" /><rect x="980.5" y="47.8" width="4" height="4" fill="none" stroke="#c8c8c8" stroke-width="0.8"/><rect x="982" y="46.599999999999994" width="4" height="4" fill="none" stroke="#c8c8c8" stroke-width="0.8"/><rect x="990.70" y="45.30" width="9.30" height="8.80" rx="1" fill="#4a4a4a" /><circle cx="995.35" cy="49.7" r="3.2" fill="none" stroke="#c8c8c8" stroke-width="0.8"/><path d="M992.15 49.7 h6.4 M995.35 46.5 v6.4" stroke="#c8c8c8" stroke-width="0.6"/><rect x="1000.40" y="45.30" width="9.30" height="8.80" rx="1" fill="#4a4a4a" /><circle cx="1005.0500000000001" cy="49.7" r="3.4" fill="#d8d8d8"/><rect x="1010.10" y="45.30" width="9.30" height="8.80" rx="1" fill="#4772b3" /><circle cx="1014.75" cy="49.7" r="3.4" fill="#ffffff"/><path d="M1014.75 49.7 v3.4 a3.4 3.4 0 0 1 -3.4 -3.4 z" fill="#4772b3"/><path d="M1014.75 46.300000000000004 v3.4 h3.4" fill="none" stroke="#4772b3" stroke-width="0.6"/><rect x="1019.80" y="45.30" width="9.30" height="8.80" rx="1" fill="#4a4a4a" /><circle cx="1024.45" cy="49.7" r="3.4" fill="#9a9a9a"/><path d="M1022.0500000000001 52.1 L1026.8500000000001 47.300000000000004" stroke="#d0d0d0" stroke-width="0.8"/><rect x="1030.00" y="45.30" width="8.40" height="8.80" rx="1" fill="#282828" /><path d="M1032.00 49.00 L1034.20 51.00 L1036.40 49.00" stroke="#c8c8c8" stroke-width="0.8" fill="none"/><rect x="531.00" y="60.60" width="19.00" height="35.10" rx="2.5" fill="#2c2c2c" /><rect x="531.00" y="98.90" width="19.00" height="71.80" rx="2.5" fill="#2c2c2c" /><rect x="531.00" y="173.90" width="19.00" height="35.90" rx="2.5" fill="#2c2c2c" /><rect x="531.00" y="212.20" width="19.00" height="17.50" rx="2.5" fill="#2c2c2c" /><rect x="531.00" y="232.90" width="19.00" height="216.10" rx="2.5" fill="#2c2c2c" /><rect x="531.00" y="60.60" width="19.00" height="16.70" rx="2.5" fill="#4772b3" /><g transform="translate(540.50,68.90) scale(1.0)"><rect x="-5.5" y="-5.5" width="11" height="11" rx="1.5" fill="none" stroke="#e0a030" stroke-width="1" stroke-dasharray="1.6 1.1"/><path d="M-1.6 -2.6 V2.6 L2.4 0.3 Z" fill="#ffffff"/></g><g transform="translate(540.50,86.50) scale(1.0)"><circle r="5" fill="none" stroke="#ffffff" stroke-width="1"/><circle r="5" fill="none" stroke="#e03a3a" stroke-width="1" stroke-dasharray="1.8 1.6"/><path d="M0 -3.2 V-1 M0 1 V3.2 M-3.2 0 H-1 M1 0 H3.2" stroke="#d8d8d8" stroke-width="0.8"/></g><g transform="translate(540.50,107.60) scale(1.0)"><path d="M-4.5 0 H4.5 M0 -4.5 V4.5" stroke="#e8e8e8" stroke-width="0.9"/><path d="M-5.5 0 L-3.2 -1.8 V1.8 Z M5.5 0 L3.2 -1.8 V1.8 Z M0 -5.5 L-1.8 -3.2 H1.8 Z M0 5.5 L-1.8 3.2 H1.8 Z" fill="#e8e8e8"/><circle r="1.2" fill="#2c2c2c" stroke="#e8e8e8" stroke-width="0.7"/></g><g transform="translate(540.50,125.20) scale(1.0)"><path d="M-4.6 1.5 A4.8 4.8 0 0 1 3 -3.8 M4.6 -1.5 A4.8 4.8 0 0 1 -3 3.8" fill="none" stroke="#e8e8e8" stroke-width="0.9"/><path d="M3.8 -5 L4.6 -1.5 L1.2 -2.5 Z M-3.8 5 L-4.6 1.5 L-1.2 2.5 Z" fill="#e8e8e8"/><circle r="1.5" fill="#e8e8e8"/></g><g transform="translate(540.50,143.50) scale(1.0)"><rect x="-4.8" y="-4.8" width="9.6" height="9.6" fill="none" stroke="#e8e8e8" stroke-width="0.9"/><rect x="-4.8" y="0" width="4.8" height="4.8" fill="#ffffff"/><path d="M0.5 -0.5 L3.5 -3.5 M1.5 -3.5 H3.5 V-1.5" stroke="#e8e8e8" stroke-width="0.8" fill="none"/></g><g transform="translate(540.50,161.50) scale(1.0)"><circle r="4.8" fill="none" stroke="#e8e8e8" stroke-width="0.9"/><rect x="-2.3" y="-2.3" width="4.6" height="4.6" fill="#ffffff"/><path d="M0 -6 V-4 M0 4 V6 M-6 0 H-4 M4 0 H6" stroke="#e8e8e8" stroke-width="0.8"/></g><g transform="translate(540.50,183.50) scale(1.0)"><path d="M-4.5 1.5 L3.5 -5" stroke="#ffffff" stroke-width="1.6" stroke-linecap="round"/><path d="M-5 4 Q-2.5 1 0 3.5 T5 3.5" stroke="#7fd6a0" stroke-width="0.8" fill="none"/></g><g transform="translate(540.50,201.00) scale(1.0)"><path d="M-4 -5.5 V4.5 H5" stroke="#e8e8e8" stroke-width="1" fill="none"/><path d="M-2.8 -4 h1.4 M-2.8 -1.5 h1.4 M-2.8 1 h1.4" stroke="#e8e8e8" stroke-width="0.6"/><path d="M-2.5 3.5 V-1 A4.5 4.5 0 0 1 2 3.5 Z" fill="#7fd6a0"/></g><g transform="translate(540.50,221.80) scale(1.0)"><g transform="translate(1,1) scale(0.9)"><path d="M-4.5 -2.5 H2.5 V4.5 H-4.5 Z M-4.5 -2.5 L-2.5 -4.5 H4.5 V2.5 L2.5 4.5 M2.5 -2.5 L4.5 -4.5" fill="none" stroke="#7fd6a0" stroke-width="0.85" stroke-linejoin="round"/></g><path d="M-5.5 -3.5 H-2 M-3.75 -5.25 V-1.75" stroke="#7fd6a0" stroke-width="0.9"/></g><g transform="translate(540.50,241.70) scale(1.0)"><path d="M-4.5 -2.5 H2.5 V4.5 H-4.5 Z M-4.5 -2.5 L-2.5 -4.5 H4.5 V2.5 L2.5 4.5 M2.5 -2.5 L4.5 -4.5" fill="none" stroke="#e6e6e6" stroke-width="0.75" stroke-linejoin="round"/><path d="M-4.5 -2.5 L-2.5 -4.5 H4.5 L2.5 -2.5 Z M-4.5 -2.5 H2.5 V0 H-4.5 Z" fill="#7fd6a0"/></g><g transform="translate(540.50,259.60) scale(1.0)"><path d="M-4.5 -2.5 H2.5 V4.5 H-4.5 Z M-4.5 -2.5 L-2.5 -4.5 H4.5 V2.5 L2.5 4.5 M2.5 -2.5 L4.5 -4.5" fill="none" stroke="#e6e6e6" stroke-width="0.75" stroke-linejoin="round"/><rect x="-3" y="-1" width="4" height="4" fill="none" stroke="#7fd6a0" stroke-width="1.4"/></g><g transform="translate(540.50,277.90) scale(1.0)"><path d="M-4.5 -2.5 H2.5 V4.5 H-4.5 Z M-4.5 -2.5 L-2.5 -4.5 H4.5 V2.5 L2.5 4.5 M2.5 -2.5 L4.5 -4.5" fill="none" stroke="#e6e6e6" stroke-width="0.75" stroke-linejoin="round"/><path d="M-4.5 -2.5 H1 Q2.5 -2.5 2.5 -1 V0.5 L4.5 -2 L2.5 -4.5 H-2.5 Z" fill="#7fd6a0"/></g><g transform="translate(540.50,296.30) scale(1.0)"><path d="M-4.5 -2.5 H2.5 V4.5 H-4.5 Z M-4.5 -2.5 L-2.5 -4.5 H4.5 V2.5 L2.5 4.5 M2.5 -2.5 L4.5 -4.5" fill="none" stroke="#e6e6e6" stroke-width="0.75" stroke-linejoin="round"/><path d="M-1 -3 V4.5 M1 -4.5 V2" stroke="#7fd6a0" stroke-width="0.9"/></g><g transform="translate(540.50,313.80) scale(1.0)"><path d="M-4.5 -2.5 H2.5 V4.5 H-4.5 Z M-4.5 -2.5 L-2.5 -4.5 H4.5 V2.5 L2.5 4.5 M2.5 -2.5 L4.5 -4.5" fill="none" stroke="#e6e6e6" stroke-width="0.75" stroke-linejoin="round"/><path d="M-3 -2.5 L0.5 4.5" stroke="#7fd6a0" stroke-width="1"/><circle cx="-3" cy="-2.5" r="0.9" fill="#7fd6a0"/><circle cx="0.5" cy="4.5" r="0.9" fill="#7fd6a0"/></g><g transform="translate(540.50,332.10) scale(1.0)"><path d="M-4.5 4 L-4.5 -1 L-1 -4.5 L4.5 -2.5 L4.5 4 Z" fill="#7fd6a0"/><circle cx="-4.5" cy="4" r="0.8" fill="#e8e8e8"/><circle cx="4.5" cy="4" r="0.8" fill="#e8e8e8"/><circle cx="-1" cy="-4.5" r="0.8" fill="#e8e8e8"/></g><g transform="translate(540.50,350.00) scale(1.0)"><circle r="5" fill="#7fd6a0"/><path d="M0 0 V-5 M0 0 L3.5 3.5 M0 0 L-4.8 1.2 M0 0 L4.8 -1.5" stroke="#2c2c2c" stroke-width="0.7"/><path d="M0 0 L0 -5 A5 5 0 0 0 -4.8 1.2 Z" fill="#2c2c2c" opacity="0.35"/></g><g transform="translate(540.50,367.50) scale(1.0)"><ellipse rx="4.6" ry="4.4" fill="#d9b8e8"/><path d="M-4.6 0 H4.6 M0 -4.4 V4.4" stroke="#8a6a9a" stroke-width="0.6"/></g><g transform="translate(540.50,385.90) scale(1.0)"><path d="M-4.5 -2.5 H2.5 V4.5 H-4.5 Z M-4.5 -2.5 L-2.5 -4.5 H4.5 V2.5 L2.5 4.5 M2.5 -2.5 L4.5 -4.5" fill="none" stroke="#e6e6e6" stroke-width="0.75" stroke-linejoin="round"/><circle cx="-5" cy="-5" r="1" fill="#d9b8e8"/></g><g transform="translate(540.50,404.20) scale(1.0)"><path d="M-5 0 H5 M0 -5 V5" stroke="#d9b8e8" stroke-width="0.9"/><path d="M-5.5 0 L-3.5 -1.5 V1.5 Z M5.5 0 L3.5 -1.5 V1.5 Z M0 -5.5 L-1.5 -3.5 H1.5 Z M0 5.5 L-1.5 3.5 H1.5 Z" fill="#d9b8e8"/><circle r="2" fill="#d9b8e8"/></g><g transform="translate(540.50,422.60) scale(1.0)"><path d="M-5.5 -1 L-2 -4.5 L5 0 L1.5 3.5 Z" fill="#d9b8e8" stroke="#ffffff" stroke-width="0.4"/><circle cx="4.5" cy="-5" r="1" fill="#d9b8e8"/></g><g transform="translate(540.50,440.10) scale(1.0)"><path d="M-4.5 -2.5 H2.5 V4.5 H-4.5 Z M-4.5 -2.5 L-2.5 -4.5 H4.5 V2.5 L2.5 4.5 M2.5 -2.5 L4.5 -4.5" fill="none" stroke="#e6e6e6" stroke-width="0.75" stroke-linejoin="round"/><path d="M-5.5 3 L-1 0" stroke="#e8e8e8" stroke-width="0.8"/></g><path d="M547.10 76.00 L548.70 74.40 L548.70 76.00 Z" fill="#9a9a9a"/><path d="M547.10 169.40 L548.70 167.80 L548.70 169.40 Z" fill="#9a9a9a"/><path d="M547.10 191.00 L548.70 189.40 L548.70 191.00 Z" fill="#9a9a9a"/><path d="M547.10 208.50 L548.70 206.90 L548.70 208.50 Z" fill="#9a9a9a"/><path d="M547.10 228.40 L548.70 226.80 L548.70 228.40 Z" fill="#9a9a9a"/><path d="M547.10 249.50 L548.70 247.90 L548.70 249.50 Z" fill="#9a9a9a"/><path d="M547.10 304.00 L548.70 302.40 L548.70 304.00 Z" fill="#9a9a9a"/><path d="M547.10 322.00 L548.70 320.40 L548.70 322.00 Z" fill="#9a9a9a"/><path d="M547.10 340.00 L548.70 338.40 L548.70 340.00 Z" fill="#9a9a9a"/><path d="M547.10 358.50 L548.70 356.90 L548.70 358.50 Z" fill="#9a9a9a"/><path d="M547.10 376.00 L548.70 374.40 L548.70 376.00 Z" fill="#9a9a9a"/><path d="M547.10 394.00 L548.70 392.40 L548.70 394.00 Z" fill="#9a9a9a"/><path d="M547.10 412.50 L548.70 410.90 L548.70 412.50 Z" fill="#9a9a9a"/><path d="M547.10 430.50 L548.70 428.90 L548.70 430.50 Z" fill="#9a9a9a"/><path d="M547.10 447.70 L548.70 446.10 L548.70 447.70 Z" fill="#9a9a9a"/><text x="559.50" y="66.80" font-size="5.65" fill="#e8e8e8" text-anchor="start" >User Perspective</text><text x="559.50" y="76.30" font-size="5.65" fill="#e8e8e8" text-anchor="start" >(1) Plane</text><path d="M1000 65.0 V80.4" stroke="#3d8ce0" stroke-width="1.3"/><path d="M1000 80.4 H1015.7" stroke="#e0304a" stroke-width="1.3"/><circle cx="984.5" cy="80.4" r="4" fill="#6a3a42" stroke="#d8344e" stroke-width="0.9"/><circle cx="1000" cy="95.7" r="4" fill="#34506e" stroke="#2f74c0" stroke-width="0.9"/><circle cx="1000" cy="80.4" r="4.3" fill="#4f5a3a" stroke="#80cc20" stroke-width="1.1"/><circle cx="1000" cy="65.0" r="4.1" fill="#2f80d8"/><text x="1000.00" y="66.90" font-size="5" fill="#0e2440" text-anchor="middle" font-weight="bold">Z</text><circle cx="1015.7" cy="80.4" r="4.1" fill="#e8304c"/><text x="1015.70" y="82.30" font-size="5" fill="#3a0a12" text-anchor="middle" font-weight="bold">X</text><path d="M1024 63.5 h-2 a1.5 1.5 0 0 0 -1.5 1.5 v5 a1.5 1.5 0 0 0 1.5 1.5 h2 z" fill="#2a2a2a"/><path d="M1023 65.5 l-1.3 2 l1.3 2" stroke="#aaa" stroke-width="0.6" fill="none"/><circle cx="1013.6" cy="106.8" r="6.5" fill="#353535"/><circle cx="1014.4" cy="106.0" r="2.6" fill="none" stroke="#e8e8e8" stroke-width="0.9"/><path d="M1012.7 107.7 l-2.3 2.3" stroke="#e8e8e8" stroke-width="1.1"/><circle cx="1013.6" cy="121.0" r="6.5" fill="#353535"/><path d="M1011.1 124.0 v-4 l1 -1 v2 v-3.5 l1 -0.5 l0.5 3 v-3.5 l1 0 l0.5 3.5 l0.5 -3 l1 0.5 v4 l1 -1 v2 l-2 2.5 z" fill="#e8e8e8"/><circle cx="1013.6" cy="135.5" r="6.5" fill="#353535"/><circle cx="1012.1" cy="133.7" r="1.6" fill="#e8e8e8"/><circle cx="1015.1" cy="133.7" r="1.6" fill="#e8e8e8"/><rect x="1010.6" y="135.0" width="4.5" height="3" fill="#e8e8e8"/><path d="M1015.1 136.5 l2.5 -1.5 v3.5 z" fill="#e8e8e8"/><circle cx="1013.6" cy="150.3" r="6.5" fill="#353535"/><path d="M1010.3000000000001 147.0 h6.6 v6.6 h-6.6 z M1012.5 147.0 v6.6 M1014.7 147.0 v6.6 M1010.3000000000001 149.20000000000002 h6.6 M1010.3000000000001 151.4 h6.6" stroke="#e8e8e8" stroke-width="0.6" fill="none"/></g><rect x="3.00" y="619.00" width="1021.00" height="21.00" rx="3" fill="#303030" /><rect x="6.80" y="621.80" width="14.70" height="10.20" rx="1.5" fill="#282828" /><circle cx="11.5" cy="626" r="2.6" fill="#e0e0e0"/><rect x="26.40" y="621.80" width="34.10" height="10.20" rx="1.5" fill="#282828" /><text x="29.00" y="627.50" font-size="5.65" fill="#d0d0d0" text-anchor="start" >Playback</text><rect x="61.50" y="621.80" width="28.30" height="10.20" rx="1.5" fill="#282828" /><text x="64.00" y="627.50" font-size="5.65" fill="#d0d0d0" text-anchor="start" >Keying</text><text x="95.00" y="627.50" font-size="5.65" fill="#d0d0d0" text-anchor="start" >View</text><text x="114.50" y="627.50" font-size="5.65" fill="#d0d0d0" text-anchor="start" >Marker</text><rect x="466.30" y="621.80" width="9.10" height="10.20" rx="1.5" fill="#4a4a4a" /><circle cx="471.2" cy="626" r="1.6" fill="#e0e0e0"/><rect x="475.40" y="621.80" width="9.60" height="10.20" rx="1.5" fill="#262626" /><rect x="489.30" y="621.80" width="9.50" height="10.20" rx="1" fill="#3a3a3a" /><rect x="499.23" y="621.80" width="9.50" height="10.20" rx="1" fill="#3a3a3a" /><rect x="509.16" y="621.80" width="9.50" height="10.20" rx="1" fill="#3a3a3a" /><rect x="519.09" y="621.80" width="9.50" height="10.20" rx="1" fill="#3a3a3a" /><rect x="529.02" y="621.80" width="9.50" height="10.20" rx="1" fill="#3a3a3a" /><rect x="538.95" y="621.80" width="9.50" height="10.20" rx="1" fill="#3a3a3a" /><g fill="#dcdcdc" stroke="#dcdcdc" stroke-width="0.8"><path d="M491.55 623.5 v6 M496.55 623.8 L492.55 626.5 L496.55 629.2 Z"/><path d="M500.98 626.5 L503.98 623.5 L506.98 626.5 L503.98 629.5 Z"/><path d="M516.4100000000001 623.5 L511.4100000000001 626.8 L516.4100000000001 630 Z"/><path d="M521.34 623.5 L526.34 626.8 L521.34 630 Z"/><path d="M530.77 626.5 L533.77 623.5 L536.77 626.5 L533.77 629.5 Z"/><path d="M546.2 623.5 v6 M541.2 623.8 L545.2 626.5 L541.2 629.2 Z"/></g><rect x="881.60" y="621.80" width="37.10" height="10.20" rx="1.5" fill="#545454" /><text x="900.00" y="627.50" font-size="5.65" fill="#e0e0e0" text-anchor="middle" >1</text><rect x="921.70" y="621.80" width="8.70" height="10.20" rx="1" fill="#3a3a3a" /><rect x="932.40" y="621.80" width="43.90" height="10.20" rx="1.5" fill="#545454" /><text x="936.00" y="627.50" font-size="5.65" fill="#e0e0e0" text-anchor="start" >Start</text><text x="972.00" y="627.50" font-size="5.65" fill="#e0e0e0" text-anchor="end" >1</text><rect x="978.30" y="621.80" width="42.00" height="10.20" rx="1.5" fill="#545454" /><text x="985.00" y="627.50" font-size="5.65" fill="#e0e0e0" text-anchor="start" >End</text><text x="1016.00" y="627.50" font-size="5.65" fill="#e0e0e0" text-anchor="end" >250</text></svg>
</body></html>
